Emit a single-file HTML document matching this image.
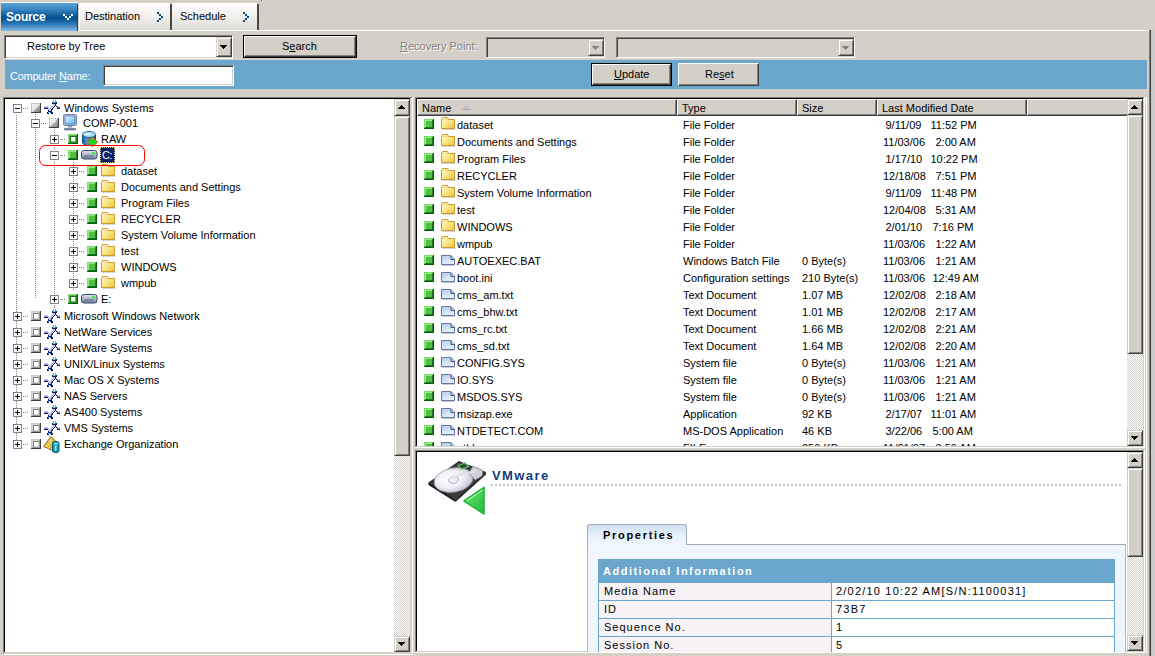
<!DOCTYPE html>
<html><head><meta charset="utf-8"><style>
*{margin:0;padding:0;box-sizing:border-box}
html,body{width:1155px;height:656px;overflow:hidden;background:#d4d0c8;font-family:"Liberation Sans",sans-serif;font-size:11px;color:#000}
body{position:relative}
.a{position:absolute}
.t{position:absolute;white-space:pre;line-height:13px}
svg{position:absolute;overflow:visible}
</style></head><body>
<div class="a" style="left:1px;top:3px;width:76px;height:28px;background:linear-gradient(#5aa3da 0%,#3f8ac4 20%,#0d5a9a 46%,#04508f 54%,#3884bf 80%,#8dbde0 100%)"></div>
<div class="a" style="left:77px;top:4px;width:1px;height:27px;background:#404040"></div>
<div class="a" style="left:1px;top:2px;width:76px;height:1px;background:#fff"></div>
<div class="t" style="left:6px;top:11px;color:#fff;font-weight:bold;font-size:12px;letter-spacing:-0.2px">Source</div>
<svg style="left:63px;top:14px" width="10" height="6"><path d="M0 0h2v2h-2zM2 2h2v2h-2zM4 4h2v2h-2zM6 2h2v2h-2zM8 0h2v2h-2z" fill="#fff"/></svg>
<div class="a" style="left:79px;top:4px;width:91px;height:26px;background:linear-gradient(#fdfdfc,#f0efec 50%,#dddbd6)"></div>
<div class="a" style="left:170px;top:4px;width:2px;height:26px;background:#484848"></div>
<div class="a" style="left:79px;top:4px;width:1px;height:26px;background:#fff"></div>
<div class="a" style="left:172px;top:4px;width:1px;height:26px;background:#fff"></div>
<div class="a" style="left:79px;top:3px;width:91px;height:1px;background:#fff"></div>
<div class="t" style="left:85px;top:10px;">Destination</div>
<div class="a" style="left:172px;top:4px;width:85px;height:26px;background:linear-gradient(#fdfdfc,#f0efec 50%,#dddbd6)"></div>
<div class="a" style="left:257px;top:4px;width:2px;height:26px;background:#484848"></div>
<div class="a" style="left:261px;top:0px;width:1px;height:1px;background:#404040"></div>
<div class="a" style="left:262px;top:0px;width:1px;height:1px;background:#fff"></div>
<div class="a" style="left:172px;top:3px;width:85px;height:1px;background:#fff"></div>
<div class="t" style="left:180px;top:10px;">Schedule</div>
<svg style="left:157px;top:12px" width="7" height="10"><path d="M0 0h2v2h-2zM2 2h2v2h-2zM4 4h2v2h-2zM2 6h2v2h-2zM0 8h2v2h-2z" fill="#0b4a7c"/></svg>
<svg style="left:243px;top:12px" width="7" height="10"><path d="M0 0h2v2h-2zM2 2h2v2h-2zM4 4h2v2h-2zM2 6h2v2h-2zM0 8h2v2h-2z" fill="#0b4a7c"/></svg>
<div class="a" style="left:78px;top:30px;width:1072px;height:1px;background:#fff"></div>
<div class="a" style="left:1149px;top:30px;width:1px;height:626px;background:#808080"></div>
<div class="a" style="left:1150px;top:30px;width:1px;height:626px;background:#404040"></div>
<div class="a" style="left:1151px;top:31px;width:4px;height:625px;background:#cacaca"></div>
<div class="a" style="left:4px;top:35px;width:229px;height:24px;background:#fff;border:1px solid;border-color:#808080 #fff #fff #808080;box-shadow:inset 1px 1px 0 #404040,inset -1px -1px 0 #d4d0c8"></div>
<div class="t" style="left:27px;top:40px;">Restore by Tree</div>
<div class="a" style="left:216px;top:37px;width:16px;height:20px;background:#d4d0c8;border:1px solid;border-color:#d4d0c8 #404040 #404040 #d4d0c8;box-shadow:inset 1px 1px 0 #fff,inset -1px -1px 0 #808080"></div>
<svg style="left:220px;top:45px" width="7" height="4"><path d="M0 0h7v1h-1v1h-1v1h-1v1h-1v-1h-1v-1h-1v-1h-1z" fill="#000"/></svg>
<div class="a" style="left:243px;top:35px;width:114px;height:23px;background:#000"></div>
<div class="a" style="left:244px;top:36px;width:112px;height:21px;background:#d4d0c8;border:1px solid;border-color:#fff #404040 #404040 #fff;box-shadow:inset -1px -1px 0 #808080"></div>
<div class="t" style="left:282px;top:40px;">S<u>e</u>arch</div>
<div class="t" style="left:400px;top:40px;color:#808080;text-shadow:1px 1px 0 #fff"><u>R</u>ecovery Point:</div>
<div class="a" style="left:486px;top:37px;width:119px;height:21px;background:#d4d0c8;border:1px solid;border-color:#808080 #fff #fff #808080;box-shadow:inset 1px 1px 0 #404040,inset -1px -1px 0 #d4d0c8"></div>
<div class="a" style="left:588px;top:39px;width:16px;height:17px;background:#d4d0c8;border:1px solid;border-color:#d4d0c8 #404040 #404040 #d4d0c8;box-shadow:inset 1px 1px 0 #fff,inset -1px -1px 0 #808080"></div>
<svg style="left:592px;top:46px" width="7" height="4"><path d="M0 0h7v1h-1v1h-1v1h-1v1h-1v-1h-1v-1h-1v-1h-1z" fill="#808080"/></svg>
<div class="a" style="left:616px;top:37px;width:239px;height:21px;background:#d4d0c8;border:1px solid;border-color:#808080 #fff #fff #808080;box-shadow:inset 1px 1px 0 #404040,inset -1px -1px 0 #d4d0c8"></div>
<div class="a" style="left:838px;top:39px;width:16px;height:17px;background:#d4d0c8;border:1px solid;border-color:#d4d0c8 #404040 #404040 #d4d0c8;box-shadow:inset 1px 1px 0 #fff,inset -1px -1px 0 #808080"></div>
<svg style="left:842px;top:46px" width="7" height="4"><path d="M0 0h7v1h-1v1h-1v1h-1v1h-1v-1h-1v-1h-1v-1h-1z" fill="#808080"/></svg>
<div class="a" style="left:5px;top:60px;width:1142px;height:29px;background:#6ba6cd"></div>
<div class="t" style="left:10px;top:70px;color:#fff;letter-spacing:-0.25px">Computer <u>N</u>ame:</div>
<div class="a" style="left:103px;top:65px;width:131px;height:21px;background:#fff;border:1px solid;border-color:#808080 #fff #fff #808080;box-shadow:inset 1px 1px 0 #404040,inset -1px -1px 0 #d4d0c8"></div>
<div class="a" style="left:591px;top:63px;width:81px;height:23px;background:#000"></div>
<div class="a" style="left:592px;top:64px;width:79px;height:21px;background:#d4d0c8;border:1px solid;border-color:#fff #404040 #404040 #fff;box-shadow:inset -1px -1px 0 #808080"></div>
<div class="t" style="left:614px;top:68px;"><u>U</u>pdate</div>
<div class="a" style="left:678px;top:63px;width:81px;height:23px;background:#d4d0c8;border:1px solid;border-color:#fff #404040 #404040 #fff;box-shadow:inset -1px -1px 0 #808080"></div>
<div class="t" style="left:705px;top:68px;">Re<u>s</u>et</div>
<div class="a" style="left:3px;top:97px;width:410px;height:558px;background:#d4d0c8"></div>
<div class="a" style="left:3px;top:97px;width:409px;height:1px;background:#808080"></div>
<div class="a" style="left:3px;top:97px;width:1px;height:557px;background:#808080"></div>
<div class="a" style="left:4px;top:98px;width:406px;height:1px;background:#000"></div>
<div class="a" style="left:4px;top:98px;width:1px;height:554px;background:#000"></div>
<div class="a" style="left:412px;top:97px;width:1px;height:558px;background:#fff"></div>
<div class="a" style="left:3px;top:654px;width:410px;height:1px;background:#fff"></div>
<div class="a" style="left:5px;top:99px;width:405px;height:553px;background:#fff"></div>
<svg style="left:394px;top:116px" width="16" height="520"><defs><pattern id="ck1" width="2" height="2" patternUnits="userSpaceOnUse"><rect width="2" height="2" fill="#fff"/><rect width="1" height="1" fill="#d4d0c8"/><rect x="1" y="1" width="1" height="1" fill="#d4d0c8"/></pattern></defs><rect width="16" height="520" fill="url(#ck1)"/></svg>
<div class="a" style="left:394px;top:99px;width:16px;height:17px;background:#d4d0c8;border:1px solid;border-color:#d4d0c8 #404040 #404040 #d4d0c8;box-shadow:inset 1px 1px 0 #fff,inset -1px -1px 0 #808080"></div>
<svg style="left:398px;top:105px" width="7" height="4"><path d="M3 0h1v1h1v1h1v1h1v1h-7v-1h1v-1h1v-1h1z" fill="#000"/></svg>
<div class="a" style="left:394px;top:116px;width:16px;height:340px;background:#d4d0c8;border:1px solid;border-color:#d4d0c8 #404040 #404040 #d4d0c8;box-shadow:inset 1px 1px 0 #fff,inset -1px -1px 0 #808080"></div>
<div class="a" style="left:394px;top:636px;width:16px;height:16px;background:#d4d0c8;border:1px solid;border-color:#d4d0c8 #404040 #404040 #d4d0c8;box-shadow:inset 1px 1px 0 #fff,inset -1px -1px 0 #808080"></div>
<svg style="left:398px;top:642px" width="7" height="4"><path d="M0 0h7v1h-1v1h-1v1h-1v1h-1v-1h-1v-1h-1v-1h-1z" fill="#000"/></svg>
<div class="a" style="left:415px;top:97px;width:730px;height:351px;background:#d4d0c8"></div>
<div class="a" style="left:415px;top:97px;width:729px;height:1px;background:#808080"></div>
<div class="a" style="left:415px;top:97px;width:1px;height:350px;background:#808080"></div>
<div class="a" style="left:416px;top:98px;width:727px;height:1px;background:#000"></div>
<div class="a" style="left:416px;top:98px;width:1px;height:348px;background:#000"></div>
<div class="a" style="left:1144px;top:97px;width:1px;height:351px;background:#fff"></div>
<div class="a" style="left:415px;top:447px;width:730px;height:1px;background:#fff"></div>
<div class="a" style="left:417px;top:99px;width:726px;height:347px;background:#fff"></div>
<div class="a" style="left:1146px;top:97px;width:1px;height:556px;background:#fff"></div>
<div class="a" style="left:417px;top:99px;width:260px;height:17px;background:#d4d0c8;border-style:solid;border-width:1px;border-color:#fff #404040 #404040 #fff;box-shadow:inset -1px -1px 0 #808080"></div>
<div class="t" style="left:422px;top:102px;">Name</div>
<div class="a" style="left:677px;top:99px;width:120px;height:17px;background:#d4d0c8;border-style:solid;border-width:1px;border-color:#fff #404040 #404040 #fff;box-shadow:inset -1px -1px 0 #808080"></div>
<div class="t" style="left:682px;top:102px;">Type</div>
<div class="a" style="left:797px;top:99px;width:80px;height:17px;background:#d4d0c8;border-style:solid;border-width:1px;border-color:#fff #404040 #404040 #fff;box-shadow:inset -1px -1px 0 #808080"></div>
<div class="t" style="left:802px;top:102px;">Size</div>
<div class="a" style="left:877px;top:99px;width:150px;height:17px;background:#d4d0c8;border-style:solid;border-width:1px;border-color:#fff #404040 #404040 #fff;box-shadow:inset -1px -1px 0 #808080"></div>
<div class="t" style="left:882px;top:102px;">Last Modified Date</div>
<div class="a" style="left:1027px;top:99px;width:116px;height:17px;background:#d4d0c8;border-style:solid;border-width:1px;border-color:#fff #404040 #404040 #fff;box-shadow:inset -1px -1px 0 #808080"></div>
<svg style="left:462px;top:104px" width="9" height="6"><path d="M0 5.5L4.5 0L9 5.5Z" fill="#c4c4cc"/><path d="M0.5 5.5H8.5" stroke="#a8a8b0"/></svg>
<svg style="left:1127px;top:115px" width="16" height="315"><defs><pattern id="ck2" width="2" height="2" patternUnits="userSpaceOnUse"><rect width="2" height="2" fill="#fff"/><rect width="1" height="1" fill="#d4d0c8"/><rect x="1" y="1" width="1" height="1" fill="#d4d0c8"/></pattern></defs><rect width="16" height="315" fill="url(#ck2)"/></svg>
<div class="a" style="left:1127px;top:99px;width:16px;height:16px;background:#d4d0c8;border:1px solid;border-color:#d4d0c8 #404040 #404040 #d4d0c8;box-shadow:inset 1px 1px 0 #fff,inset -1px -1px 0 #808080"></div>
<svg style="left:1131px;top:105px" width="7" height="4"><path d="M3 0h1v1h1v1h1v1h1v1h-7v-1h1v-1h1v-1h1z" fill="#000"/></svg>
<div class="a" style="left:1127px;top:115px;width:16px;height:239px;background:#d4d0c8;border:1px solid;border-color:#d4d0c8 #404040 #404040 #d4d0c8;box-shadow:inset 1px 1px 0 #fff,inset -1px -1px 0 #808080"></div>
<div class="a" style="left:1127px;top:430px;width:16px;height:16px;background:#d4d0c8;border:1px solid;border-color:#d4d0c8 #404040 #404040 #d4d0c8;box-shadow:inset 1px 1px 0 #fff,inset -1px -1px 0 #808080"></div>
<svg style="left:1131px;top:436px" width="7" height="4"><path d="M0 0h7v1h-1v1h-1v1h-1v1h-1v-1h-1v-1h-1v-1h-1z" fill="#000"/></svg>
<div class="a" style="left:415px;top:450px;width:730px;height:203px;background:#d4d0c8"></div>
<div class="a" style="left:415px;top:450px;width:729px;height:1px;background:#808080"></div>
<div class="a" style="left:415px;top:450px;width:1px;height:202px;background:#808080"></div>
<div class="a" style="left:416px;top:451px;width:727px;height:1px;background:#000"></div>
<div class="a" style="left:416px;top:451px;width:1px;height:200px;background:#000"></div>
<div class="a" style="left:1144px;top:450px;width:1px;height:203px;background:#fff"></div>
<div class="a" style="left:415px;top:652px;width:730px;height:1px;background:#fff"></div>
<div class="a" style="left:417px;top:452px;width:726px;height:199px;background:#fff"></div>
<svg style="left:1127px;top:468px" width="16" height="167"><defs><pattern id="ck3" width="2" height="2" patternUnits="userSpaceOnUse"><rect width="2" height="2" fill="#fff"/><rect width="1" height="1" fill="#d4d0c8"/><rect x="1" y="1" width="1" height="1" fill="#d4d0c8"/></pattern></defs><rect width="16" height="167" fill="url(#ck3)"/></svg>
<div class="a" style="left:1127px;top:452px;width:16px;height:16px;background:#d4d0c8;border:1px solid;border-color:#d4d0c8 #404040 #404040 #d4d0c8;box-shadow:inset 1px 1px 0 #fff,inset -1px -1px 0 #808080"></div>
<svg style="left:1131px;top:458px" width="7" height="4"><path d="M3 0h1v1h1v1h1v1h1v1h-7v-1h1v-1h1v-1h1z" fill="#000"/></svg>
<div class="a" style="left:1127px;top:468px;width:16px;height:89px;background:#d4d0c8;border:1px solid;border-color:#d4d0c8 #404040 #404040 #d4d0c8;box-shadow:inset 1px 1px 0 #fff,inset -1px -1px 0 #808080"></div>
<div class="a" style="left:1127px;top:635px;width:16px;height:16px;background:#d4d0c8;border:1px solid;border-color:#d4d0c8 #404040 #404040 #d4d0c8;box-shadow:inset 1px 1px 0 #fff,inset -1px -1px 0 #808080"></div>
<svg style="left:1131px;top:641px" width="7" height="4"><path d="M0 0h7v1h-1v1h-1v1h-1v1h-1v-1h-1v-1h-1v-1h-1z" fill="#000"/></svg>
<div class="a" style="left:16px;top:115px;width:1px;height:325px;background:repeating-linear-gradient(#848284 0 1px,transparent 1px 2px)"></div>
<div class="a" style="left:35px;top:114px;width:1px;height:5px;background:repeating-linear-gradient(#848284 0 1px,transparent 1px 2px)"></div>
<div class="a" style="left:35px;top:129px;width:1px;height:170px;background:repeating-linear-gradient(#848284 0 1px,transparent 1px 2px)"></div>
<div class="a" style="left:54px;top:130px;width:1px;height:5px;background:repeating-linear-gradient(#848284 0 1px,transparent 1px 2px)"></div>
<div class="a" style="left:54px;top:145px;width:1px;height:150px;background:repeating-linear-gradient(#848284 0 1px,transparent 1px 2px)"></div>
<div class="a" style="left:54px;top:305px;width:1px;height:3px;background:repeating-linear-gradient(#848284 0 1px,transparent 1px 2px)"></div>
<div class="a" style="left:73px;top:162px;width:1px;height:5px;background:repeating-linear-gradient(#848284 0 1px,transparent 1px 2px)"></div>
<div class="a" style="left:73px;top:177px;width:1px;height:6px;background:repeating-linear-gradient(#848284 0 1px,transparent 1px 2px)"></div>
<div class="a" style="left:73px;top:193px;width:1px;height:6px;background:repeating-linear-gradient(#848284 0 1px,transparent 1px 2px)"></div>
<div class="a" style="left:73px;top:209px;width:1px;height:6px;background:repeating-linear-gradient(#848284 0 1px,transparent 1px 2px)"></div>
<div class="a" style="left:73px;top:225px;width:1px;height:6px;background:repeating-linear-gradient(#848284 0 1px,transparent 1px 2px)"></div>
<div class="a" style="left:73px;top:241px;width:1px;height:6px;background:repeating-linear-gradient(#848284 0 1px,transparent 1px 2px)"></div>
<div class="a" style="left:73px;top:257px;width:1px;height:6px;background:repeating-linear-gradient(#848284 0 1px,transparent 1px 2px)"></div>
<div class="a" style="left:73px;top:273px;width:1px;height:6px;background:repeating-linear-gradient(#848284 0 1px,transparent 1px 2px)"></div>
<div class="a" style="left:73px;top:289px;width:1px;height:2px;background:repeating-linear-gradient(#848284 0 1px,transparent 1px 2px)"></div>
<div class="a" style="left:23px;top:108px;width:6px;height:1px;background:repeating-linear-gradient(90deg,#848284 0 1px,transparent 1px 2px)"></div>
<div class="a" style="left:13px;top:104px;width:9px;height:9px;border:1px solid #848284;background:#fff"></div>
<div class="a" style="left:15px;top:108px;width:5px;height:1px;background:#000"></div>
<svg style="left:31px;top:103px" width="10" height="10"><defs><linearGradient id="gf" x1="0" y1="0" x2="1" y2="1"><stop offset="0" stop-color="#fafafa"/><stop offset="0.5" stop-color="#e4e4e4"/><stop offset="0.5" stop-color="#b4b4b4"/><stop offset="1" stop-color="#707070"/></linearGradient></defs><rect width="10" height="10" fill="url(#gf)"/><path d="M0 0h10v1h-10z" fill="#c8c8c8"/><path d="M0 0h1v10h-1z" fill="#c0c0c0"/><path d="M9 0h1v10h-1zM0 9h10v1h-10z" fill="#3c3c3c"/></svg>
<svg style="left:44px;top:100px" width="16" height="14"><rect x="9" y="0" width="1" height="1" fill="#8e98c8"/><rect x="11" y="0" width="1" height="1" fill="#8e98c8"/><rect x="9" y="1" width="1" height="1" fill="#8e98c8"/><rect x="11" y="1" width="1" height="1" fill="#8e98c8"/><rect x="8" y="2" width="1" height="1" fill="#0e1a5c"/><rect x="9" y="2" width="2" height="1" fill="#48dcff"/><rect x="11" y="2" width="1" height="1" fill="#2a6ae6"/><rect x="12" y="2" width="1" height="1" fill="#0e1a5c"/><rect x="8" y="3" width="5" height="1" fill="#0e1a5c"/><rect x="9" y="4" width="2" height="1" fill="#c2c8e8"/><rect x="11" y="4" width="1" height="1" fill="#0e1a5c"/><rect x="8" y="5" width="3" height="1" fill="#c2c8e8"/><rect x="11" y="5" width="1" height="1" fill="#0e1a5c"/><rect x="12" y="5" width="1" height="1" fill="#c2c8e8"/><rect x="0" y="6" width="4" height="1" fill="#c2c8e8"/><rect x="7" y="6" width="3" height="1" fill="#c2c8e8"/><rect x="10" y="6" width="1" height="1" fill="#0e1a5c"/><rect x="12" y="6" width="1" height="1" fill="#0e1a5c"/><rect x="13" y="6" width="3" height="1" fill="#c2c8e8"/><rect x="0" y="7" width="4" height="1" fill="#8e98c8"/><rect x="4" y="7" width="1" height="1" fill="#c2c8e8"/><rect x="6" y="7" width="3" height="1" fill="#c2c8e8"/><rect x="9" y="7" width="1" height="1" fill="#0e1a5c"/><rect x="13" y="7" width="1" height="1" fill="#0e1a5c"/><rect x="14" y="7" width="2" height="1" fill="#8e98c8"/><rect x="0" y="8" width="4" height="1" fill="#0e1a5c"/><rect x="4" y="8" width="4" height="1" fill="#c2c8e8"/><rect x="8" y="8" width="1" height="1" fill="#0e1a5c"/><rect x="13" y="8" width="3" height="1" fill="#0e1a5c"/><rect x="4" y="9" width="3" height="1" fill="#c2c8e8"/><rect x="7" y="9" width="2" height="1" fill="#0e1a5c"/><rect x="4" y="10" width="1" height="1" fill="#0e1a5c"/><rect x="5" y="10" width="2" height="1" fill="#c2c8e8"/><rect x="7" y="10" width="1" height="1" fill="#0e1a5c"/><rect x="4" y="11" width="4" height="1" fill="#0e1a5c"/><rect x="3" y="12" width="1" height="1" fill="#0e1a5c"/><rect x="4" y="12" width="2" height="1" fill="#48dcff"/><rect x="6" y="12" width="1" height="1" fill="#2a6ae6"/><rect x="7" y="12" width="2" height="1" fill="#0e1a5c"/><rect x="3" y="13" width="2" height="1" fill="#0e1a5c"/><rect x="7" y="13" width="2" height="1" fill="#0e1a5c"/></svg>
<div class="t" style="left:64px;top:102px;">Windows Systems</div>
<div class="a" style="left:41px;top:123px;width:6px;height:1px;background:repeating-linear-gradient(90deg,#848284 0 1px,transparent 1px 2px)"></div>
<div class="a" style="left:31px;top:119px;width:9px;height:9px;border:1px solid #848284;background:#fff"></div>
<div class="a" style="left:33px;top:123px;width:5px;height:1px;background:#000"></div>
<svg style="left:49px;top:118px" width="10" height="10"><defs><linearGradient id="gf" x1="0" y1="0" x2="1" y2="1"><stop offset="0" stop-color="#fafafa"/><stop offset="0.5" stop-color="#e4e4e4"/><stop offset="0.5" stop-color="#b4b4b4"/><stop offset="1" stop-color="#707070"/></linearGradient></defs><rect width="10" height="10" fill="url(#gf)"/><path d="M0 0h10v1h-10z" fill="#c8c8c8"/><path d="M0 0h1v10h-1z" fill="#c0c0c0"/><path d="M9 0h1v10h-1zM0 9h10v1h-10z" fill="#3c3c3c"/></svg>
<svg style="left:63px;top:114px" width="15" height="17"><defs><linearGradient id="cs" x1="0" y1="0" x2="1" y2="1"><stop offset="0" stop-color="#e8f6ff"/><stop offset="0.5" stop-color="#9fd6f6"/><stop offset="1" stop-color="#5fb8ea"/></linearGradient></defs><rect x="0.5" y="0.5" width="13" height="11" rx="1" fill="#c4cce0" stroke="#7a86a8"/><rect x="2" y="2" width="10" height="8" fill="url(#cs)" stroke="#4a78b8" stroke-width="0.8"/><path d="M5 12H9L9.5 13.5H4.5Z" fill="#8a96b4"/><path d="M1.5 14.5H12.5V16H1.5Z" fill="#7680a0" stroke="#5a6488" stroke-width="0.6"/></svg>
<div class="t" style="left:83px;top:117px;">COMP-001</div>
<div class="a" style="left:60px;top:139px;width:6px;height:1px;background:repeating-linear-gradient(90deg,#848284 0 1px,transparent 1px 2px)"></div>
<div class="a" style="left:50px;top:135px;width:9px;height:9px;border:1px solid #848284;background:#fff"></div>
<div class="a" style="left:52px;top:139px;width:5px;height:1px;background:#000"></div>
<div class="a" style="left:54px;top:137px;width:1px;height:5px;background:#000"></div>
<svg style="left:68px;top:134px" width="10" height="10"><rect width="10" height="10" fill="#58c448"/><path d="M0 0h10v1h-10zM0 0h1v10h-1z" fill="#8ae078"/><path d="M2 2h6v1h-6zM2 2h1v6h-1z" fill="#1c6e1c"/><rect x="3" y="3" width="4" height="4" fill="#fff"/><path d="M9 0h1v10h-1zM0 9h10v1h-10z" fill="#0a5a10"/><path d="M8 1h1v8h-1zM1 8h8v1h-8z" fill="#2a8a28"/></svg>
<svg style="left:82px;top:131px" width="17" height="17"><defs><linearGradient id="db" x1="0" y1="0" x2="1" y2="0"><stop offset="0" stop-color="#1a5f94"/><stop offset="0.35" stop-color="#4b98cc"/><stop offset="1" stop-color="#164f80"/></linearGradient></defs><path d="M0.5 3.5V11.5C0.5 13.2 3.5 14.5 7 14.5C10.5 14.5 13.5 13.2 13.5 11.5V3.5Z" fill="url(#db)" stroke="#124a78"/><ellipse cx="7" cy="3.5" rx="6.5" ry="3" fill="#a8d6ee" stroke="#1f6a9c"/><ellipse cx="6" cy="3.2" rx="3.5" ry="1.3" fill="#d8f0fc"/><path d="M10.5 6.5L15.5 11L10.5 15.5L5.5 11Z" fill="#10e020" stroke="#c07020" stroke-width="1.2"/></svg>
<div class="t" style="left:101px;top:133px;">RAW</div>
<div class="a" style="left:60px;top:155px;width:6px;height:1px;background:repeating-linear-gradient(90deg,#848284 0 1px,transparent 1px 2px)"></div>
<div class="a" style="left:50px;top:151px;width:9px;height:9px;border:1px solid #848284;background:#fff"></div>
<div class="a" style="left:52px;top:155px;width:5px;height:1px;background:#000"></div>
<svg style="left:68px;top:150px" width="10" height="10"><rect width="10" height="10" fill="#48b53a"/><path d="M0 0h10v1h-10zM0 0h1v10h-1z" fill="#7edc6c"/><path d="M1 1h8v1h-8zM1 1h1v8h-1z" fill="#9be88a"/><path d="M2 2h6v6h-6z" fill="#52bf42"/><path d="M9 0h1v10h-1zM0 9h10v1h-10z" fill="#0a5a10"/><path d="M8 1h1v8h-1zM1 8h8v1h-8z" fill="#1d7a1e"/></svg>
<svg style="left:81px;top:150px" width="17" height="10"><defs><linearGradient id="dr" x1="0" y1="0" x2="0" y2="1"><stop offset="0" stop-color="#dfe4ee"/><stop offset="0.55" stop-color="#aab4c8"/><stop offset="1" stop-color="#6a7898"/></linearGradient></defs><rect x="0.5" y="0.5" width="15.5" height="8.5" rx="2.5" fill="url(#dr)" stroke="#3a4870"/><path d="M2.5 6H13" stroke="#5a6888" stroke-width="1"/><rect x="11" y="2.5" width="3" height="1.5" fill="#22e030"/></svg>
<div class="a" style="left:100px;top:147px;width:15px;height:16px;background:#0a246a;outline:1px dotted #f0d070;outline-offset:-1px"></div>
<div class="t" style="left:102px;top:149px;color:#fff;letter-spacing:-0.6px">C:</div>
<div class="a" style="left:79px;top:171px;width:6px;height:1px;background:repeating-linear-gradient(90deg,#848284 0 1px,transparent 1px 2px)"></div>
<div class="a" style="left:69px;top:167px;width:9px;height:9px;border:1px solid #848284;background:#fff"></div>
<div class="a" style="left:71px;top:171px;width:5px;height:1px;background:#000"></div>
<div class="a" style="left:73px;top:169px;width:1px;height:5px;background:#000"></div>
<svg style="left:87px;top:166px" width="10" height="10"><rect width="10" height="10" fill="#48b53a"/><path d="M0 0h10v1h-10zM0 0h1v10h-1z" fill="#7edc6c"/><path d="M1 1h8v1h-8zM1 1h1v8h-1z" fill="#9be88a"/><path d="M2 2h6v6h-6z" fill="#52bf42"/><path d="M9 0h1v10h-1zM0 9h10v1h-10z" fill="#0a5a10"/><path d="M8 1h1v8h-1zM1 8h8v1h-8z" fill="#1d7a1e"/></svg>
<svg style="left:101px;top:164px" width="15" height="13"><defs><linearGradient id="fg" x1="0" y1="0" x2="1" y2="1"><stop offset="0" stop-color="#fffbe0"/><stop offset="0.45" stop-color="#fbe88c"/><stop offset="1" stop-color="#eec23c"/></linearGradient></defs><path d="M1 12.5L14.5 12.5L14.5 13" stroke="#d8d8d8" fill="none"/><path d="M0.5 2.5L1.5 0.5H6.5L7.5 2.5H13.5V11.5H0.5Z" fill="url(#fg)" stroke="#c99a2e"/><path d="M1 2.5H7" stroke="#f6dc80"/></svg>
<div class="t" style="left:121px;top:165px;">dataset</div>
<div class="a" style="left:79px;top:187px;width:6px;height:1px;background:repeating-linear-gradient(90deg,#848284 0 1px,transparent 1px 2px)"></div>
<div class="a" style="left:69px;top:183px;width:9px;height:9px;border:1px solid #848284;background:#fff"></div>
<div class="a" style="left:71px;top:187px;width:5px;height:1px;background:#000"></div>
<div class="a" style="left:73px;top:185px;width:1px;height:5px;background:#000"></div>
<svg style="left:87px;top:182px" width="10" height="10"><rect width="10" height="10" fill="#48b53a"/><path d="M0 0h10v1h-10zM0 0h1v10h-1z" fill="#7edc6c"/><path d="M1 1h8v1h-8zM1 1h1v8h-1z" fill="#9be88a"/><path d="M2 2h6v6h-6z" fill="#52bf42"/><path d="M9 0h1v10h-1zM0 9h10v1h-10z" fill="#0a5a10"/><path d="M8 1h1v8h-1zM1 8h8v1h-8z" fill="#1d7a1e"/></svg>
<svg style="left:101px;top:180px" width="15" height="13"><defs><linearGradient id="fg" x1="0" y1="0" x2="1" y2="1"><stop offset="0" stop-color="#fffbe0"/><stop offset="0.45" stop-color="#fbe88c"/><stop offset="1" stop-color="#eec23c"/></linearGradient></defs><path d="M1 12.5L14.5 12.5L14.5 13" stroke="#d8d8d8" fill="none"/><path d="M0.5 2.5L1.5 0.5H6.5L7.5 2.5H13.5V11.5H0.5Z" fill="url(#fg)" stroke="#c99a2e"/><path d="M1 2.5H7" stroke="#f6dc80"/></svg>
<div class="t" style="left:121px;top:181px;">Documents and Settings</div>
<div class="a" style="left:79px;top:203px;width:6px;height:1px;background:repeating-linear-gradient(90deg,#848284 0 1px,transparent 1px 2px)"></div>
<div class="a" style="left:69px;top:199px;width:9px;height:9px;border:1px solid #848284;background:#fff"></div>
<div class="a" style="left:71px;top:203px;width:5px;height:1px;background:#000"></div>
<div class="a" style="left:73px;top:201px;width:1px;height:5px;background:#000"></div>
<svg style="left:87px;top:198px" width="10" height="10"><rect width="10" height="10" fill="#48b53a"/><path d="M0 0h10v1h-10zM0 0h1v10h-1z" fill="#7edc6c"/><path d="M1 1h8v1h-8zM1 1h1v8h-1z" fill="#9be88a"/><path d="M2 2h6v6h-6z" fill="#52bf42"/><path d="M9 0h1v10h-1zM0 9h10v1h-10z" fill="#0a5a10"/><path d="M8 1h1v8h-1zM1 8h8v1h-8z" fill="#1d7a1e"/></svg>
<svg style="left:101px;top:196px" width="15" height="13"><defs><linearGradient id="fg" x1="0" y1="0" x2="1" y2="1"><stop offset="0" stop-color="#fffbe0"/><stop offset="0.45" stop-color="#fbe88c"/><stop offset="1" stop-color="#eec23c"/></linearGradient></defs><path d="M1 12.5L14.5 12.5L14.5 13" stroke="#d8d8d8" fill="none"/><path d="M0.5 2.5L1.5 0.5H6.5L7.5 2.5H13.5V11.5H0.5Z" fill="url(#fg)" stroke="#c99a2e"/><path d="M1 2.5H7" stroke="#f6dc80"/></svg>
<div class="t" style="left:121px;top:197px;">Program Files</div>
<div class="a" style="left:79px;top:219px;width:6px;height:1px;background:repeating-linear-gradient(90deg,#848284 0 1px,transparent 1px 2px)"></div>
<div class="a" style="left:69px;top:215px;width:9px;height:9px;border:1px solid #848284;background:#fff"></div>
<div class="a" style="left:71px;top:219px;width:5px;height:1px;background:#000"></div>
<div class="a" style="left:73px;top:217px;width:1px;height:5px;background:#000"></div>
<svg style="left:87px;top:214px" width="10" height="10"><rect width="10" height="10" fill="#48b53a"/><path d="M0 0h10v1h-10zM0 0h1v10h-1z" fill="#7edc6c"/><path d="M1 1h8v1h-8zM1 1h1v8h-1z" fill="#9be88a"/><path d="M2 2h6v6h-6z" fill="#52bf42"/><path d="M9 0h1v10h-1zM0 9h10v1h-10z" fill="#0a5a10"/><path d="M8 1h1v8h-1zM1 8h8v1h-8z" fill="#1d7a1e"/></svg>
<svg style="left:101px;top:212px" width="15" height="13"><defs><linearGradient id="fg" x1="0" y1="0" x2="1" y2="1"><stop offset="0" stop-color="#fffbe0"/><stop offset="0.45" stop-color="#fbe88c"/><stop offset="1" stop-color="#eec23c"/></linearGradient></defs><path d="M1 12.5L14.5 12.5L14.5 13" stroke="#d8d8d8" fill="none"/><path d="M0.5 2.5L1.5 0.5H6.5L7.5 2.5H13.5V11.5H0.5Z" fill="url(#fg)" stroke="#c99a2e"/><path d="M1 2.5H7" stroke="#f6dc80"/></svg>
<div class="t" style="left:121px;top:213px;">RECYCLER</div>
<div class="a" style="left:79px;top:235px;width:6px;height:1px;background:repeating-linear-gradient(90deg,#848284 0 1px,transparent 1px 2px)"></div>
<div class="a" style="left:69px;top:231px;width:9px;height:9px;border:1px solid #848284;background:#fff"></div>
<div class="a" style="left:71px;top:235px;width:5px;height:1px;background:#000"></div>
<div class="a" style="left:73px;top:233px;width:1px;height:5px;background:#000"></div>
<svg style="left:87px;top:230px" width="10" height="10"><rect width="10" height="10" fill="#48b53a"/><path d="M0 0h10v1h-10zM0 0h1v10h-1z" fill="#7edc6c"/><path d="M1 1h8v1h-8zM1 1h1v8h-1z" fill="#9be88a"/><path d="M2 2h6v6h-6z" fill="#52bf42"/><path d="M9 0h1v10h-1zM0 9h10v1h-10z" fill="#0a5a10"/><path d="M8 1h1v8h-1zM1 8h8v1h-8z" fill="#1d7a1e"/></svg>
<svg style="left:101px;top:228px" width="15" height="13"><defs><linearGradient id="fg" x1="0" y1="0" x2="1" y2="1"><stop offset="0" stop-color="#fffbe0"/><stop offset="0.45" stop-color="#fbe88c"/><stop offset="1" stop-color="#eec23c"/></linearGradient></defs><path d="M1 12.5L14.5 12.5L14.5 13" stroke="#d8d8d8" fill="none"/><path d="M0.5 2.5L1.5 0.5H6.5L7.5 2.5H13.5V11.5H0.5Z" fill="url(#fg)" stroke="#c99a2e"/><path d="M1 2.5H7" stroke="#f6dc80"/></svg>
<div class="t" style="left:121px;top:229px;">System Volume Information</div>
<div class="a" style="left:79px;top:251px;width:6px;height:1px;background:repeating-linear-gradient(90deg,#848284 0 1px,transparent 1px 2px)"></div>
<div class="a" style="left:69px;top:247px;width:9px;height:9px;border:1px solid #848284;background:#fff"></div>
<div class="a" style="left:71px;top:251px;width:5px;height:1px;background:#000"></div>
<div class="a" style="left:73px;top:249px;width:1px;height:5px;background:#000"></div>
<svg style="left:87px;top:246px" width="10" height="10"><rect width="10" height="10" fill="#48b53a"/><path d="M0 0h10v1h-10zM0 0h1v10h-1z" fill="#7edc6c"/><path d="M1 1h8v1h-8zM1 1h1v8h-1z" fill="#9be88a"/><path d="M2 2h6v6h-6z" fill="#52bf42"/><path d="M9 0h1v10h-1zM0 9h10v1h-10z" fill="#0a5a10"/><path d="M8 1h1v8h-1zM1 8h8v1h-8z" fill="#1d7a1e"/></svg>
<svg style="left:101px;top:244px" width="15" height="13"><defs><linearGradient id="fg" x1="0" y1="0" x2="1" y2="1"><stop offset="0" stop-color="#fffbe0"/><stop offset="0.45" stop-color="#fbe88c"/><stop offset="1" stop-color="#eec23c"/></linearGradient></defs><path d="M1 12.5L14.5 12.5L14.5 13" stroke="#d8d8d8" fill="none"/><path d="M0.5 2.5L1.5 0.5H6.5L7.5 2.5H13.5V11.5H0.5Z" fill="url(#fg)" stroke="#c99a2e"/><path d="M1 2.5H7" stroke="#f6dc80"/></svg>
<div class="t" style="left:121px;top:245px;">test</div>
<div class="a" style="left:79px;top:267px;width:6px;height:1px;background:repeating-linear-gradient(90deg,#848284 0 1px,transparent 1px 2px)"></div>
<div class="a" style="left:69px;top:263px;width:9px;height:9px;border:1px solid #848284;background:#fff"></div>
<div class="a" style="left:71px;top:267px;width:5px;height:1px;background:#000"></div>
<div class="a" style="left:73px;top:265px;width:1px;height:5px;background:#000"></div>
<svg style="left:87px;top:262px" width="10" height="10"><rect width="10" height="10" fill="#48b53a"/><path d="M0 0h10v1h-10zM0 0h1v10h-1z" fill="#7edc6c"/><path d="M1 1h8v1h-8zM1 1h1v8h-1z" fill="#9be88a"/><path d="M2 2h6v6h-6z" fill="#52bf42"/><path d="M9 0h1v10h-1zM0 9h10v1h-10z" fill="#0a5a10"/><path d="M8 1h1v8h-1zM1 8h8v1h-8z" fill="#1d7a1e"/></svg>
<svg style="left:101px;top:260px" width="15" height="13"><defs><linearGradient id="fg" x1="0" y1="0" x2="1" y2="1"><stop offset="0" stop-color="#fffbe0"/><stop offset="0.45" stop-color="#fbe88c"/><stop offset="1" stop-color="#eec23c"/></linearGradient></defs><path d="M1 12.5L14.5 12.5L14.5 13" stroke="#d8d8d8" fill="none"/><path d="M0.5 2.5L1.5 0.5H6.5L7.5 2.5H13.5V11.5H0.5Z" fill="url(#fg)" stroke="#c99a2e"/><path d="M1 2.5H7" stroke="#f6dc80"/></svg>
<div class="t" style="left:121px;top:261px;">WINDOWS</div>
<div class="a" style="left:79px;top:283px;width:6px;height:1px;background:repeating-linear-gradient(90deg,#848284 0 1px,transparent 1px 2px)"></div>
<div class="a" style="left:69px;top:279px;width:9px;height:9px;border:1px solid #848284;background:#fff"></div>
<div class="a" style="left:71px;top:283px;width:5px;height:1px;background:#000"></div>
<div class="a" style="left:73px;top:281px;width:1px;height:5px;background:#000"></div>
<svg style="left:87px;top:278px" width="10" height="10"><rect width="10" height="10" fill="#48b53a"/><path d="M0 0h10v1h-10zM0 0h1v10h-1z" fill="#7edc6c"/><path d="M1 1h8v1h-8zM1 1h1v8h-1z" fill="#9be88a"/><path d="M2 2h6v6h-6z" fill="#52bf42"/><path d="M9 0h1v10h-1zM0 9h10v1h-10z" fill="#0a5a10"/><path d="M8 1h1v8h-1zM1 8h8v1h-8z" fill="#1d7a1e"/></svg>
<svg style="left:101px;top:276px" width="15" height="13"><defs><linearGradient id="fg" x1="0" y1="0" x2="1" y2="1"><stop offset="0" stop-color="#fffbe0"/><stop offset="0.45" stop-color="#fbe88c"/><stop offset="1" stop-color="#eec23c"/></linearGradient></defs><path d="M1 12.5L14.5 12.5L14.5 13" stroke="#d8d8d8" fill="none"/><path d="M0.5 2.5L1.5 0.5H6.5L7.5 2.5H13.5V11.5H0.5Z" fill="url(#fg)" stroke="#c99a2e"/><path d="M1 2.5H7" stroke="#f6dc80"/></svg>
<div class="t" style="left:121px;top:277px;">wmpub</div>
<div class="a" style="left:60px;top:299px;width:6px;height:1px;background:repeating-linear-gradient(90deg,#848284 0 1px,transparent 1px 2px)"></div>
<div class="a" style="left:50px;top:295px;width:9px;height:9px;border:1px solid #848284;background:#fff"></div>
<div class="a" style="left:52px;top:299px;width:5px;height:1px;background:#000"></div>
<div class="a" style="left:54px;top:297px;width:1px;height:5px;background:#000"></div>
<svg style="left:68px;top:294px" width="10" height="10"><rect width="10" height="10" fill="#58c448"/><path d="M0 0h10v1h-10zM0 0h1v10h-1z" fill="#8ae078"/><path d="M2 2h6v1h-6zM2 2h1v6h-1z" fill="#1c6e1c"/><rect x="3" y="3" width="4" height="4" fill="#fff"/><path d="M9 0h1v10h-1zM0 9h10v1h-10z" fill="#0a5a10"/><path d="M8 1h1v8h-1zM1 8h8v1h-8z" fill="#2a8a28"/></svg>
<svg style="left:81px;top:294px" width="17" height="10"><defs><linearGradient id="dr" x1="0" y1="0" x2="0" y2="1"><stop offset="0" stop-color="#dfe4ee"/><stop offset="0.55" stop-color="#aab4c8"/><stop offset="1" stop-color="#6a7898"/></linearGradient></defs><rect x="0.5" y="0.5" width="15.5" height="8.5" rx="2.5" fill="url(#dr)" stroke="#3a4870"/><path d="M2.5 6H13" stroke="#5a6888" stroke-width="1"/><rect x="11" y="2.5" width="3" height="1.5" fill="#22e030"/></svg>
<div class="t" style="left:101px;top:293px;">E:</div>
<div class="a" style="left:23px;top:316px;width:6px;height:1px;background:repeating-linear-gradient(90deg,#848284 0 1px,transparent 1px 2px)"></div>
<div class="a" style="left:13px;top:312px;width:9px;height:9px;border:1px solid #848284;background:#fff"></div>
<div class="a" style="left:15px;top:316px;width:5px;height:1px;background:#000"></div>
<div class="a" style="left:17px;top:314px;width:1px;height:5px;background:#000"></div>
<svg style="left:31px;top:311px" width="10" height="10"><rect width="10" height="10" fill="#c8c8c8"/><path d="M1 1h8v8h-8z" fill="#d6d6d6"/><path d="M2 2h6v1h-6zM2 2h1v6h-1z" fill="#808080"/><rect x="3" y="3" width="4" height="4" fill="#fff"/><path d="M9 0h1v10h-1zM0 9h10v1h-10z" fill="#404040"/><path d="M8 1h1v8h-1zM1 8h8v1h-8z" fill="#9a9a9a"/></svg>
<svg style="left:44px;top:309px" width="16" height="14"><rect x="9" y="0" width="1" height="1" fill="#8e98c8"/><rect x="11" y="0" width="1" height="1" fill="#8e98c8"/><rect x="9" y="1" width="1" height="1" fill="#8e98c8"/><rect x="11" y="1" width="1" height="1" fill="#8e98c8"/><rect x="8" y="2" width="1" height="1" fill="#0e1a5c"/><rect x="9" y="2" width="2" height="1" fill="#48dcff"/><rect x="11" y="2" width="1" height="1" fill="#2a6ae6"/><rect x="12" y="2" width="1" height="1" fill="#0e1a5c"/><rect x="8" y="3" width="5" height="1" fill="#0e1a5c"/><rect x="9" y="4" width="2" height="1" fill="#c2c8e8"/><rect x="11" y="4" width="1" height="1" fill="#0e1a5c"/><rect x="8" y="5" width="3" height="1" fill="#c2c8e8"/><rect x="11" y="5" width="1" height="1" fill="#0e1a5c"/><rect x="12" y="5" width="1" height="1" fill="#c2c8e8"/><rect x="0" y="6" width="4" height="1" fill="#c2c8e8"/><rect x="7" y="6" width="3" height="1" fill="#c2c8e8"/><rect x="10" y="6" width="1" height="1" fill="#0e1a5c"/><rect x="12" y="6" width="1" height="1" fill="#0e1a5c"/><rect x="13" y="6" width="3" height="1" fill="#c2c8e8"/><rect x="0" y="7" width="4" height="1" fill="#8e98c8"/><rect x="4" y="7" width="1" height="1" fill="#c2c8e8"/><rect x="6" y="7" width="3" height="1" fill="#c2c8e8"/><rect x="9" y="7" width="1" height="1" fill="#0e1a5c"/><rect x="13" y="7" width="1" height="1" fill="#0e1a5c"/><rect x="14" y="7" width="2" height="1" fill="#8e98c8"/><rect x="0" y="8" width="4" height="1" fill="#0e1a5c"/><rect x="4" y="8" width="4" height="1" fill="#c2c8e8"/><rect x="8" y="8" width="1" height="1" fill="#0e1a5c"/><rect x="13" y="8" width="3" height="1" fill="#0e1a5c"/><rect x="4" y="9" width="3" height="1" fill="#c2c8e8"/><rect x="7" y="9" width="2" height="1" fill="#0e1a5c"/><rect x="4" y="10" width="1" height="1" fill="#0e1a5c"/><rect x="5" y="10" width="2" height="1" fill="#c2c8e8"/><rect x="7" y="10" width="1" height="1" fill="#0e1a5c"/><rect x="4" y="11" width="4" height="1" fill="#0e1a5c"/><rect x="3" y="12" width="1" height="1" fill="#0e1a5c"/><rect x="4" y="12" width="2" height="1" fill="#48dcff"/><rect x="6" y="12" width="1" height="1" fill="#2a6ae6"/><rect x="7" y="12" width="2" height="1" fill="#0e1a5c"/><rect x="3" y="13" width="2" height="1" fill="#0e1a5c"/><rect x="7" y="13" width="2" height="1" fill="#0e1a5c"/></svg>
<div class="t" style="left:64px;top:310px;">Microsoft Windows Network</div>
<div class="a" style="left:23px;top:332px;width:6px;height:1px;background:repeating-linear-gradient(90deg,#848284 0 1px,transparent 1px 2px)"></div>
<div class="a" style="left:13px;top:328px;width:9px;height:9px;border:1px solid #848284;background:#fff"></div>
<div class="a" style="left:15px;top:332px;width:5px;height:1px;background:#000"></div>
<div class="a" style="left:17px;top:330px;width:1px;height:5px;background:#000"></div>
<svg style="left:31px;top:327px" width="10" height="10"><rect width="10" height="10" fill="#c8c8c8"/><path d="M1 1h8v8h-8z" fill="#d6d6d6"/><path d="M2 2h6v1h-6zM2 2h1v6h-1z" fill="#808080"/><rect x="3" y="3" width="4" height="4" fill="#fff"/><path d="M9 0h1v10h-1zM0 9h10v1h-10z" fill="#404040"/><path d="M8 1h1v8h-1zM1 8h8v1h-8z" fill="#9a9a9a"/></svg>
<svg style="left:44px;top:325px" width="16" height="14"><rect x="9" y="0" width="1" height="1" fill="#8e98c8"/><rect x="11" y="0" width="1" height="1" fill="#8e98c8"/><rect x="9" y="1" width="1" height="1" fill="#8e98c8"/><rect x="11" y="1" width="1" height="1" fill="#8e98c8"/><rect x="8" y="2" width="1" height="1" fill="#0e1a5c"/><rect x="9" y="2" width="2" height="1" fill="#48dcff"/><rect x="11" y="2" width="1" height="1" fill="#2a6ae6"/><rect x="12" y="2" width="1" height="1" fill="#0e1a5c"/><rect x="8" y="3" width="5" height="1" fill="#0e1a5c"/><rect x="9" y="4" width="2" height="1" fill="#c2c8e8"/><rect x="11" y="4" width="1" height="1" fill="#0e1a5c"/><rect x="8" y="5" width="3" height="1" fill="#c2c8e8"/><rect x="11" y="5" width="1" height="1" fill="#0e1a5c"/><rect x="12" y="5" width="1" height="1" fill="#c2c8e8"/><rect x="0" y="6" width="4" height="1" fill="#c2c8e8"/><rect x="7" y="6" width="3" height="1" fill="#c2c8e8"/><rect x="10" y="6" width="1" height="1" fill="#0e1a5c"/><rect x="12" y="6" width="1" height="1" fill="#0e1a5c"/><rect x="13" y="6" width="3" height="1" fill="#c2c8e8"/><rect x="0" y="7" width="4" height="1" fill="#8e98c8"/><rect x="4" y="7" width="1" height="1" fill="#c2c8e8"/><rect x="6" y="7" width="3" height="1" fill="#c2c8e8"/><rect x="9" y="7" width="1" height="1" fill="#0e1a5c"/><rect x="13" y="7" width="1" height="1" fill="#0e1a5c"/><rect x="14" y="7" width="2" height="1" fill="#8e98c8"/><rect x="0" y="8" width="4" height="1" fill="#0e1a5c"/><rect x="4" y="8" width="4" height="1" fill="#c2c8e8"/><rect x="8" y="8" width="1" height="1" fill="#0e1a5c"/><rect x="13" y="8" width="3" height="1" fill="#0e1a5c"/><rect x="4" y="9" width="3" height="1" fill="#c2c8e8"/><rect x="7" y="9" width="2" height="1" fill="#0e1a5c"/><rect x="4" y="10" width="1" height="1" fill="#0e1a5c"/><rect x="5" y="10" width="2" height="1" fill="#c2c8e8"/><rect x="7" y="10" width="1" height="1" fill="#0e1a5c"/><rect x="4" y="11" width="4" height="1" fill="#0e1a5c"/><rect x="3" y="12" width="1" height="1" fill="#0e1a5c"/><rect x="4" y="12" width="2" height="1" fill="#48dcff"/><rect x="6" y="12" width="1" height="1" fill="#2a6ae6"/><rect x="7" y="12" width="2" height="1" fill="#0e1a5c"/><rect x="3" y="13" width="2" height="1" fill="#0e1a5c"/><rect x="7" y="13" width="2" height="1" fill="#0e1a5c"/></svg>
<div class="t" style="left:64px;top:326px;">NetWare Services</div>
<div class="a" style="left:23px;top:348px;width:6px;height:1px;background:repeating-linear-gradient(90deg,#848284 0 1px,transparent 1px 2px)"></div>
<div class="a" style="left:13px;top:344px;width:9px;height:9px;border:1px solid #848284;background:#fff"></div>
<div class="a" style="left:15px;top:348px;width:5px;height:1px;background:#000"></div>
<div class="a" style="left:17px;top:346px;width:1px;height:5px;background:#000"></div>
<svg style="left:31px;top:343px" width="10" height="10"><rect width="10" height="10" fill="#c8c8c8"/><path d="M1 1h8v8h-8z" fill="#d6d6d6"/><path d="M2 2h6v1h-6zM2 2h1v6h-1z" fill="#808080"/><rect x="3" y="3" width="4" height="4" fill="#fff"/><path d="M9 0h1v10h-1zM0 9h10v1h-10z" fill="#404040"/><path d="M8 1h1v8h-1zM1 8h8v1h-8z" fill="#9a9a9a"/></svg>
<svg style="left:44px;top:341px" width="16" height="14"><rect x="9" y="0" width="1" height="1" fill="#8e98c8"/><rect x="11" y="0" width="1" height="1" fill="#8e98c8"/><rect x="9" y="1" width="1" height="1" fill="#8e98c8"/><rect x="11" y="1" width="1" height="1" fill="#8e98c8"/><rect x="8" y="2" width="1" height="1" fill="#0e1a5c"/><rect x="9" y="2" width="2" height="1" fill="#48dcff"/><rect x="11" y="2" width="1" height="1" fill="#2a6ae6"/><rect x="12" y="2" width="1" height="1" fill="#0e1a5c"/><rect x="8" y="3" width="5" height="1" fill="#0e1a5c"/><rect x="9" y="4" width="2" height="1" fill="#c2c8e8"/><rect x="11" y="4" width="1" height="1" fill="#0e1a5c"/><rect x="8" y="5" width="3" height="1" fill="#c2c8e8"/><rect x="11" y="5" width="1" height="1" fill="#0e1a5c"/><rect x="12" y="5" width="1" height="1" fill="#c2c8e8"/><rect x="0" y="6" width="4" height="1" fill="#c2c8e8"/><rect x="7" y="6" width="3" height="1" fill="#c2c8e8"/><rect x="10" y="6" width="1" height="1" fill="#0e1a5c"/><rect x="12" y="6" width="1" height="1" fill="#0e1a5c"/><rect x="13" y="6" width="3" height="1" fill="#c2c8e8"/><rect x="0" y="7" width="4" height="1" fill="#8e98c8"/><rect x="4" y="7" width="1" height="1" fill="#c2c8e8"/><rect x="6" y="7" width="3" height="1" fill="#c2c8e8"/><rect x="9" y="7" width="1" height="1" fill="#0e1a5c"/><rect x="13" y="7" width="1" height="1" fill="#0e1a5c"/><rect x="14" y="7" width="2" height="1" fill="#8e98c8"/><rect x="0" y="8" width="4" height="1" fill="#0e1a5c"/><rect x="4" y="8" width="4" height="1" fill="#c2c8e8"/><rect x="8" y="8" width="1" height="1" fill="#0e1a5c"/><rect x="13" y="8" width="3" height="1" fill="#0e1a5c"/><rect x="4" y="9" width="3" height="1" fill="#c2c8e8"/><rect x="7" y="9" width="2" height="1" fill="#0e1a5c"/><rect x="4" y="10" width="1" height="1" fill="#0e1a5c"/><rect x="5" y="10" width="2" height="1" fill="#c2c8e8"/><rect x="7" y="10" width="1" height="1" fill="#0e1a5c"/><rect x="4" y="11" width="4" height="1" fill="#0e1a5c"/><rect x="3" y="12" width="1" height="1" fill="#0e1a5c"/><rect x="4" y="12" width="2" height="1" fill="#48dcff"/><rect x="6" y="12" width="1" height="1" fill="#2a6ae6"/><rect x="7" y="12" width="2" height="1" fill="#0e1a5c"/><rect x="3" y="13" width="2" height="1" fill="#0e1a5c"/><rect x="7" y="13" width="2" height="1" fill="#0e1a5c"/></svg>
<div class="t" style="left:64px;top:342px;">NetWare Systems</div>
<div class="a" style="left:23px;top:364px;width:6px;height:1px;background:repeating-linear-gradient(90deg,#848284 0 1px,transparent 1px 2px)"></div>
<div class="a" style="left:13px;top:360px;width:9px;height:9px;border:1px solid #848284;background:#fff"></div>
<div class="a" style="left:15px;top:364px;width:5px;height:1px;background:#000"></div>
<div class="a" style="left:17px;top:362px;width:1px;height:5px;background:#000"></div>
<svg style="left:31px;top:359px" width="10" height="10"><rect width="10" height="10" fill="#c8c8c8"/><path d="M1 1h8v8h-8z" fill="#d6d6d6"/><path d="M2 2h6v1h-6zM2 2h1v6h-1z" fill="#808080"/><rect x="3" y="3" width="4" height="4" fill="#fff"/><path d="M9 0h1v10h-1zM0 9h10v1h-10z" fill="#404040"/><path d="M8 1h1v8h-1zM1 8h8v1h-8z" fill="#9a9a9a"/></svg>
<svg style="left:44px;top:357px" width="16" height="14"><rect x="9" y="0" width="1" height="1" fill="#8e98c8"/><rect x="11" y="0" width="1" height="1" fill="#8e98c8"/><rect x="9" y="1" width="1" height="1" fill="#8e98c8"/><rect x="11" y="1" width="1" height="1" fill="#8e98c8"/><rect x="8" y="2" width="1" height="1" fill="#0e1a5c"/><rect x="9" y="2" width="2" height="1" fill="#48dcff"/><rect x="11" y="2" width="1" height="1" fill="#2a6ae6"/><rect x="12" y="2" width="1" height="1" fill="#0e1a5c"/><rect x="8" y="3" width="5" height="1" fill="#0e1a5c"/><rect x="9" y="4" width="2" height="1" fill="#c2c8e8"/><rect x="11" y="4" width="1" height="1" fill="#0e1a5c"/><rect x="8" y="5" width="3" height="1" fill="#c2c8e8"/><rect x="11" y="5" width="1" height="1" fill="#0e1a5c"/><rect x="12" y="5" width="1" height="1" fill="#c2c8e8"/><rect x="0" y="6" width="4" height="1" fill="#c2c8e8"/><rect x="7" y="6" width="3" height="1" fill="#c2c8e8"/><rect x="10" y="6" width="1" height="1" fill="#0e1a5c"/><rect x="12" y="6" width="1" height="1" fill="#0e1a5c"/><rect x="13" y="6" width="3" height="1" fill="#c2c8e8"/><rect x="0" y="7" width="4" height="1" fill="#8e98c8"/><rect x="4" y="7" width="1" height="1" fill="#c2c8e8"/><rect x="6" y="7" width="3" height="1" fill="#c2c8e8"/><rect x="9" y="7" width="1" height="1" fill="#0e1a5c"/><rect x="13" y="7" width="1" height="1" fill="#0e1a5c"/><rect x="14" y="7" width="2" height="1" fill="#8e98c8"/><rect x="0" y="8" width="4" height="1" fill="#0e1a5c"/><rect x="4" y="8" width="4" height="1" fill="#c2c8e8"/><rect x="8" y="8" width="1" height="1" fill="#0e1a5c"/><rect x="13" y="8" width="3" height="1" fill="#0e1a5c"/><rect x="4" y="9" width="3" height="1" fill="#c2c8e8"/><rect x="7" y="9" width="2" height="1" fill="#0e1a5c"/><rect x="4" y="10" width="1" height="1" fill="#0e1a5c"/><rect x="5" y="10" width="2" height="1" fill="#c2c8e8"/><rect x="7" y="10" width="1" height="1" fill="#0e1a5c"/><rect x="4" y="11" width="4" height="1" fill="#0e1a5c"/><rect x="3" y="12" width="1" height="1" fill="#0e1a5c"/><rect x="4" y="12" width="2" height="1" fill="#48dcff"/><rect x="6" y="12" width="1" height="1" fill="#2a6ae6"/><rect x="7" y="12" width="2" height="1" fill="#0e1a5c"/><rect x="3" y="13" width="2" height="1" fill="#0e1a5c"/><rect x="7" y="13" width="2" height="1" fill="#0e1a5c"/></svg>
<div class="t" style="left:64px;top:358px;">UNIX/Linux Systems</div>
<div class="a" style="left:23px;top:380px;width:6px;height:1px;background:repeating-linear-gradient(90deg,#848284 0 1px,transparent 1px 2px)"></div>
<div class="a" style="left:13px;top:376px;width:9px;height:9px;border:1px solid #848284;background:#fff"></div>
<div class="a" style="left:15px;top:380px;width:5px;height:1px;background:#000"></div>
<div class="a" style="left:17px;top:378px;width:1px;height:5px;background:#000"></div>
<svg style="left:31px;top:375px" width="10" height="10"><rect width="10" height="10" fill="#c8c8c8"/><path d="M1 1h8v8h-8z" fill="#d6d6d6"/><path d="M2 2h6v1h-6zM2 2h1v6h-1z" fill="#808080"/><rect x="3" y="3" width="4" height="4" fill="#fff"/><path d="M9 0h1v10h-1zM0 9h10v1h-10z" fill="#404040"/><path d="M8 1h1v8h-1zM1 8h8v1h-8z" fill="#9a9a9a"/></svg>
<svg style="left:44px;top:373px" width="16" height="14"><rect x="9" y="0" width="1" height="1" fill="#8e98c8"/><rect x="11" y="0" width="1" height="1" fill="#8e98c8"/><rect x="9" y="1" width="1" height="1" fill="#8e98c8"/><rect x="11" y="1" width="1" height="1" fill="#8e98c8"/><rect x="8" y="2" width="1" height="1" fill="#0e1a5c"/><rect x="9" y="2" width="2" height="1" fill="#48dcff"/><rect x="11" y="2" width="1" height="1" fill="#2a6ae6"/><rect x="12" y="2" width="1" height="1" fill="#0e1a5c"/><rect x="8" y="3" width="5" height="1" fill="#0e1a5c"/><rect x="9" y="4" width="2" height="1" fill="#c2c8e8"/><rect x="11" y="4" width="1" height="1" fill="#0e1a5c"/><rect x="8" y="5" width="3" height="1" fill="#c2c8e8"/><rect x="11" y="5" width="1" height="1" fill="#0e1a5c"/><rect x="12" y="5" width="1" height="1" fill="#c2c8e8"/><rect x="0" y="6" width="4" height="1" fill="#c2c8e8"/><rect x="7" y="6" width="3" height="1" fill="#c2c8e8"/><rect x="10" y="6" width="1" height="1" fill="#0e1a5c"/><rect x="12" y="6" width="1" height="1" fill="#0e1a5c"/><rect x="13" y="6" width="3" height="1" fill="#c2c8e8"/><rect x="0" y="7" width="4" height="1" fill="#8e98c8"/><rect x="4" y="7" width="1" height="1" fill="#c2c8e8"/><rect x="6" y="7" width="3" height="1" fill="#c2c8e8"/><rect x="9" y="7" width="1" height="1" fill="#0e1a5c"/><rect x="13" y="7" width="1" height="1" fill="#0e1a5c"/><rect x="14" y="7" width="2" height="1" fill="#8e98c8"/><rect x="0" y="8" width="4" height="1" fill="#0e1a5c"/><rect x="4" y="8" width="4" height="1" fill="#c2c8e8"/><rect x="8" y="8" width="1" height="1" fill="#0e1a5c"/><rect x="13" y="8" width="3" height="1" fill="#0e1a5c"/><rect x="4" y="9" width="3" height="1" fill="#c2c8e8"/><rect x="7" y="9" width="2" height="1" fill="#0e1a5c"/><rect x="4" y="10" width="1" height="1" fill="#0e1a5c"/><rect x="5" y="10" width="2" height="1" fill="#c2c8e8"/><rect x="7" y="10" width="1" height="1" fill="#0e1a5c"/><rect x="4" y="11" width="4" height="1" fill="#0e1a5c"/><rect x="3" y="12" width="1" height="1" fill="#0e1a5c"/><rect x="4" y="12" width="2" height="1" fill="#48dcff"/><rect x="6" y="12" width="1" height="1" fill="#2a6ae6"/><rect x="7" y="12" width="2" height="1" fill="#0e1a5c"/><rect x="3" y="13" width="2" height="1" fill="#0e1a5c"/><rect x="7" y="13" width="2" height="1" fill="#0e1a5c"/></svg>
<div class="t" style="left:64px;top:374px;">Mac OS X Systems</div>
<div class="a" style="left:23px;top:396px;width:6px;height:1px;background:repeating-linear-gradient(90deg,#848284 0 1px,transparent 1px 2px)"></div>
<div class="a" style="left:13px;top:392px;width:9px;height:9px;border:1px solid #848284;background:#fff"></div>
<div class="a" style="left:15px;top:396px;width:5px;height:1px;background:#000"></div>
<div class="a" style="left:17px;top:394px;width:1px;height:5px;background:#000"></div>
<svg style="left:31px;top:391px" width="10" height="10"><rect width="10" height="10" fill="#c8c8c8"/><path d="M1 1h8v8h-8z" fill="#d6d6d6"/><path d="M2 2h6v1h-6zM2 2h1v6h-1z" fill="#808080"/><rect x="3" y="3" width="4" height="4" fill="#fff"/><path d="M9 0h1v10h-1zM0 9h10v1h-10z" fill="#404040"/><path d="M8 1h1v8h-1zM1 8h8v1h-8z" fill="#9a9a9a"/></svg>
<svg style="left:44px;top:389px" width="16" height="14"><rect x="9" y="0" width="1" height="1" fill="#8e98c8"/><rect x="11" y="0" width="1" height="1" fill="#8e98c8"/><rect x="9" y="1" width="1" height="1" fill="#8e98c8"/><rect x="11" y="1" width="1" height="1" fill="#8e98c8"/><rect x="8" y="2" width="1" height="1" fill="#0e1a5c"/><rect x="9" y="2" width="2" height="1" fill="#48dcff"/><rect x="11" y="2" width="1" height="1" fill="#2a6ae6"/><rect x="12" y="2" width="1" height="1" fill="#0e1a5c"/><rect x="8" y="3" width="5" height="1" fill="#0e1a5c"/><rect x="9" y="4" width="2" height="1" fill="#c2c8e8"/><rect x="11" y="4" width="1" height="1" fill="#0e1a5c"/><rect x="8" y="5" width="3" height="1" fill="#c2c8e8"/><rect x="11" y="5" width="1" height="1" fill="#0e1a5c"/><rect x="12" y="5" width="1" height="1" fill="#c2c8e8"/><rect x="0" y="6" width="4" height="1" fill="#c2c8e8"/><rect x="7" y="6" width="3" height="1" fill="#c2c8e8"/><rect x="10" y="6" width="1" height="1" fill="#0e1a5c"/><rect x="12" y="6" width="1" height="1" fill="#0e1a5c"/><rect x="13" y="6" width="3" height="1" fill="#c2c8e8"/><rect x="0" y="7" width="4" height="1" fill="#8e98c8"/><rect x="4" y="7" width="1" height="1" fill="#c2c8e8"/><rect x="6" y="7" width="3" height="1" fill="#c2c8e8"/><rect x="9" y="7" width="1" height="1" fill="#0e1a5c"/><rect x="13" y="7" width="1" height="1" fill="#0e1a5c"/><rect x="14" y="7" width="2" height="1" fill="#8e98c8"/><rect x="0" y="8" width="4" height="1" fill="#0e1a5c"/><rect x="4" y="8" width="4" height="1" fill="#c2c8e8"/><rect x="8" y="8" width="1" height="1" fill="#0e1a5c"/><rect x="13" y="8" width="3" height="1" fill="#0e1a5c"/><rect x="4" y="9" width="3" height="1" fill="#c2c8e8"/><rect x="7" y="9" width="2" height="1" fill="#0e1a5c"/><rect x="4" y="10" width="1" height="1" fill="#0e1a5c"/><rect x="5" y="10" width="2" height="1" fill="#c2c8e8"/><rect x="7" y="10" width="1" height="1" fill="#0e1a5c"/><rect x="4" y="11" width="4" height="1" fill="#0e1a5c"/><rect x="3" y="12" width="1" height="1" fill="#0e1a5c"/><rect x="4" y="12" width="2" height="1" fill="#48dcff"/><rect x="6" y="12" width="1" height="1" fill="#2a6ae6"/><rect x="7" y="12" width="2" height="1" fill="#0e1a5c"/><rect x="3" y="13" width="2" height="1" fill="#0e1a5c"/><rect x="7" y="13" width="2" height="1" fill="#0e1a5c"/></svg>
<div class="t" style="left:64px;top:390px;">NAS Servers</div>
<div class="a" style="left:23px;top:412px;width:6px;height:1px;background:repeating-linear-gradient(90deg,#848284 0 1px,transparent 1px 2px)"></div>
<div class="a" style="left:13px;top:408px;width:9px;height:9px;border:1px solid #848284;background:#fff"></div>
<div class="a" style="left:15px;top:412px;width:5px;height:1px;background:#000"></div>
<div class="a" style="left:17px;top:410px;width:1px;height:5px;background:#000"></div>
<svg style="left:31px;top:407px" width="10" height="10"><rect width="10" height="10" fill="#c8c8c8"/><path d="M1 1h8v8h-8z" fill="#d6d6d6"/><path d="M2 2h6v1h-6zM2 2h1v6h-1z" fill="#808080"/><rect x="3" y="3" width="4" height="4" fill="#fff"/><path d="M9 0h1v10h-1zM0 9h10v1h-10z" fill="#404040"/><path d="M8 1h1v8h-1zM1 8h8v1h-8z" fill="#9a9a9a"/></svg>
<svg style="left:44px;top:405px" width="16" height="14"><rect x="9" y="0" width="1" height="1" fill="#8e98c8"/><rect x="11" y="0" width="1" height="1" fill="#8e98c8"/><rect x="9" y="1" width="1" height="1" fill="#8e98c8"/><rect x="11" y="1" width="1" height="1" fill="#8e98c8"/><rect x="8" y="2" width="1" height="1" fill="#0e1a5c"/><rect x="9" y="2" width="2" height="1" fill="#48dcff"/><rect x="11" y="2" width="1" height="1" fill="#2a6ae6"/><rect x="12" y="2" width="1" height="1" fill="#0e1a5c"/><rect x="8" y="3" width="5" height="1" fill="#0e1a5c"/><rect x="9" y="4" width="2" height="1" fill="#c2c8e8"/><rect x="11" y="4" width="1" height="1" fill="#0e1a5c"/><rect x="8" y="5" width="3" height="1" fill="#c2c8e8"/><rect x="11" y="5" width="1" height="1" fill="#0e1a5c"/><rect x="12" y="5" width="1" height="1" fill="#c2c8e8"/><rect x="0" y="6" width="4" height="1" fill="#c2c8e8"/><rect x="7" y="6" width="3" height="1" fill="#c2c8e8"/><rect x="10" y="6" width="1" height="1" fill="#0e1a5c"/><rect x="12" y="6" width="1" height="1" fill="#0e1a5c"/><rect x="13" y="6" width="3" height="1" fill="#c2c8e8"/><rect x="0" y="7" width="4" height="1" fill="#8e98c8"/><rect x="4" y="7" width="1" height="1" fill="#c2c8e8"/><rect x="6" y="7" width="3" height="1" fill="#c2c8e8"/><rect x="9" y="7" width="1" height="1" fill="#0e1a5c"/><rect x="13" y="7" width="1" height="1" fill="#0e1a5c"/><rect x="14" y="7" width="2" height="1" fill="#8e98c8"/><rect x="0" y="8" width="4" height="1" fill="#0e1a5c"/><rect x="4" y="8" width="4" height="1" fill="#c2c8e8"/><rect x="8" y="8" width="1" height="1" fill="#0e1a5c"/><rect x="13" y="8" width="3" height="1" fill="#0e1a5c"/><rect x="4" y="9" width="3" height="1" fill="#c2c8e8"/><rect x="7" y="9" width="2" height="1" fill="#0e1a5c"/><rect x="4" y="10" width="1" height="1" fill="#0e1a5c"/><rect x="5" y="10" width="2" height="1" fill="#c2c8e8"/><rect x="7" y="10" width="1" height="1" fill="#0e1a5c"/><rect x="4" y="11" width="4" height="1" fill="#0e1a5c"/><rect x="3" y="12" width="1" height="1" fill="#0e1a5c"/><rect x="4" y="12" width="2" height="1" fill="#48dcff"/><rect x="6" y="12" width="1" height="1" fill="#2a6ae6"/><rect x="7" y="12" width="2" height="1" fill="#0e1a5c"/><rect x="3" y="13" width="2" height="1" fill="#0e1a5c"/><rect x="7" y="13" width="2" height="1" fill="#0e1a5c"/></svg>
<div class="t" style="left:64px;top:406px;">AS400 Systems</div>
<div class="a" style="left:23px;top:428px;width:6px;height:1px;background:repeating-linear-gradient(90deg,#848284 0 1px,transparent 1px 2px)"></div>
<div class="a" style="left:13px;top:424px;width:9px;height:9px;border:1px solid #848284;background:#fff"></div>
<div class="a" style="left:15px;top:428px;width:5px;height:1px;background:#000"></div>
<div class="a" style="left:17px;top:426px;width:1px;height:5px;background:#000"></div>
<svg style="left:31px;top:423px" width="10" height="10"><rect width="10" height="10" fill="#c8c8c8"/><path d="M1 1h8v8h-8z" fill="#d6d6d6"/><path d="M2 2h6v1h-6zM2 2h1v6h-1z" fill="#808080"/><rect x="3" y="3" width="4" height="4" fill="#fff"/><path d="M9 0h1v10h-1zM0 9h10v1h-10z" fill="#404040"/><path d="M8 1h1v8h-1zM1 8h8v1h-8z" fill="#9a9a9a"/></svg>
<svg style="left:44px;top:421px" width="16" height="14"><rect x="9" y="0" width="1" height="1" fill="#8e98c8"/><rect x="11" y="0" width="1" height="1" fill="#8e98c8"/><rect x="9" y="1" width="1" height="1" fill="#8e98c8"/><rect x="11" y="1" width="1" height="1" fill="#8e98c8"/><rect x="8" y="2" width="1" height="1" fill="#0e1a5c"/><rect x="9" y="2" width="2" height="1" fill="#48dcff"/><rect x="11" y="2" width="1" height="1" fill="#2a6ae6"/><rect x="12" y="2" width="1" height="1" fill="#0e1a5c"/><rect x="8" y="3" width="5" height="1" fill="#0e1a5c"/><rect x="9" y="4" width="2" height="1" fill="#c2c8e8"/><rect x="11" y="4" width="1" height="1" fill="#0e1a5c"/><rect x="8" y="5" width="3" height="1" fill="#c2c8e8"/><rect x="11" y="5" width="1" height="1" fill="#0e1a5c"/><rect x="12" y="5" width="1" height="1" fill="#c2c8e8"/><rect x="0" y="6" width="4" height="1" fill="#c2c8e8"/><rect x="7" y="6" width="3" height="1" fill="#c2c8e8"/><rect x="10" y="6" width="1" height="1" fill="#0e1a5c"/><rect x="12" y="6" width="1" height="1" fill="#0e1a5c"/><rect x="13" y="6" width="3" height="1" fill="#c2c8e8"/><rect x="0" y="7" width="4" height="1" fill="#8e98c8"/><rect x="4" y="7" width="1" height="1" fill="#c2c8e8"/><rect x="6" y="7" width="3" height="1" fill="#c2c8e8"/><rect x="9" y="7" width="1" height="1" fill="#0e1a5c"/><rect x="13" y="7" width="1" height="1" fill="#0e1a5c"/><rect x="14" y="7" width="2" height="1" fill="#8e98c8"/><rect x="0" y="8" width="4" height="1" fill="#0e1a5c"/><rect x="4" y="8" width="4" height="1" fill="#c2c8e8"/><rect x="8" y="8" width="1" height="1" fill="#0e1a5c"/><rect x="13" y="8" width="3" height="1" fill="#0e1a5c"/><rect x="4" y="9" width="3" height="1" fill="#c2c8e8"/><rect x="7" y="9" width="2" height="1" fill="#0e1a5c"/><rect x="4" y="10" width="1" height="1" fill="#0e1a5c"/><rect x="5" y="10" width="2" height="1" fill="#c2c8e8"/><rect x="7" y="10" width="1" height="1" fill="#0e1a5c"/><rect x="4" y="11" width="4" height="1" fill="#0e1a5c"/><rect x="3" y="12" width="1" height="1" fill="#0e1a5c"/><rect x="4" y="12" width="2" height="1" fill="#48dcff"/><rect x="6" y="12" width="1" height="1" fill="#2a6ae6"/><rect x="7" y="12" width="2" height="1" fill="#0e1a5c"/><rect x="3" y="13" width="2" height="1" fill="#0e1a5c"/><rect x="7" y="13" width="2" height="1" fill="#0e1a5c"/></svg>
<div class="t" style="left:64px;top:422px;">VMS Systems</div>
<div class="a" style="left:23px;top:444px;width:6px;height:1px;background:repeating-linear-gradient(90deg,#848284 0 1px,transparent 1px 2px)"></div>
<div class="a" style="left:13px;top:440px;width:9px;height:9px;border:1px solid #848284;background:#fff"></div>
<div class="a" style="left:15px;top:444px;width:5px;height:1px;background:#000"></div>
<div class="a" style="left:17px;top:442px;width:1px;height:5px;background:#000"></div>
<svg style="left:31px;top:439px" width="10" height="10"><rect width="10" height="10" fill="#c8c8c8"/><path d="M1 1h8v8h-8z" fill="#d6d6d6"/><path d="M2 2h6v1h-6zM2 2h1v6h-1z" fill="#808080"/><rect x="3" y="3" width="4" height="4" fill="#fff"/><path d="M9 0h1v10h-1zM0 9h10v1h-10z" fill="#404040"/><path d="M8 1h1v8h-1zM1 8h8v1h-8z" fill="#9a9a9a"/></svg>
<svg style="left:43px;top:436px" width="17" height="17"><defs><linearGradient id="ex" x1="0" y1="0" x2="1" y2="1"><stop offset="0" stop-color="#f8e070"/><stop offset="0.6" stop-color="#e8b838"/><stop offset="1" stop-color="#b88418"/></linearGradient></defs><path d="M8 0.5L13.5 6L9.5 14.5L0.5 10.5Z" fill="url(#ex)" stroke="#7a5408" stroke-width="0.9" stroke-linejoin="round"/><path d="M3 9.5h1.2v1h-1.2zM5 8h1.2v1h-1.2zM6 10.5h1.2v1h-1.2zM7 6h1.2v1h-1.2zM4.5 11.8h1.2v1h-1.2zM8 12.5h1.2v1h-1.2zM6.5 4h1.2v1h-1.2z" fill="#fff4b0"/><rect x="9.5" y="5.5" width="6.5" height="11" rx="2" fill="#129aa8" stroke="#0a5e6c"/><path d="M11 8C12 7 14.5 7 14.5 8.5M12.8 9V15M11.5 12H13" stroke="#9aeaff" stroke-width="1.3" fill="none"/></svg>
<div class="t" style="left:64px;top:438px;">Exchange Organization</div>
<svg style="left:38px;top:144px" width="109" height="23"><path d="M7.5 1.5H100.5A6 6 0 0 1 106.5 7.5V15.5A6 6 0 0 1 100.5 21.5H7.5A6 6 0 0 1 1.5 15.5V7.5A6 6 0 0 1 7.5 1.5Z" fill="none" stroke="#ff0000" stroke-width="1" stroke-linejoin="round"/></svg>
<div class="a" style="left:417px;top:116px;width:710px;height:330px;overflow:hidden">
<svg style="left:7px;top:3px" width="10" height="10"><rect width="10" height="10" fill="#48b53a"/><path d="M0 0h10v1h-10zM0 0h1v10h-1z" fill="#7edc6c"/><path d="M1 1h8v1h-8zM1 1h1v8h-1z" fill="#9be88a"/><path d="M2 2h6v6h-6z" fill="#52bf42"/><path d="M9 0h1v10h-1zM0 9h10v1h-10z" fill="#0a5a10"/><path d="M8 1h1v8h-1zM1 8h8v1h-8z" fill="#1d7a1e"/></svg>
<svg style="left:24px;top:1px" width="15" height="13"><defs><linearGradient id="fg" x1="0" y1="0" x2="1" y2="1"><stop offset="0" stop-color="#fffbe0"/><stop offset="0.45" stop-color="#fbe88c"/><stop offset="1" stop-color="#eec23c"/></linearGradient></defs><path d="M1 12.5L14.5 12.5L14.5 13" stroke="#d8d8d8" fill="none"/><path d="M0.5 2.5L1.5 0.5H6.5L7.5 2.5H13.5V11.5H0.5Z" fill="url(#fg)" stroke="#c99a2e"/><path d="M1 2.5H7" stroke="#f6dc80"/></svg>
<div class="t" style="left:40px;top:3px;">dataset</div>
<div class="t" style="left:266px;top:3px;">File Folder</div>
<div class="t" style="left:468.5px;top:3px;">9/11/09</div>
<div class="t" style="left:513.5px;top:3px;">11:52 PM</div>
<svg style="left:7px;top:20px" width="10" height="10"><rect width="10" height="10" fill="#48b53a"/><path d="M0 0h10v1h-10zM0 0h1v10h-1z" fill="#7edc6c"/><path d="M1 1h8v1h-8zM1 1h1v8h-1z" fill="#9be88a"/><path d="M2 2h6v6h-6z" fill="#52bf42"/><path d="M9 0h1v10h-1zM0 9h10v1h-10z" fill="#0a5a10"/><path d="M8 1h1v8h-1zM1 8h8v1h-8z" fill="#1d7a1e"/></svg>
<svg style="left:24px;top:18px" width="15" height="13"><defs><linearGradient id="fg" x1="0" y1="0" x2="1" y2="1"><stop offset="0" stop-color="#fffbe0"/><stop offset="0.45" stop-color="#fbe88c"/><stop offset="1" stop-color="#eec23c"/></linearGradient></defs><path d="M1 12.5L14.5 12.5L14.5 13" stroke="#d8d8d8" fill="none"/><path d="M0.5 2.5L1.5 0.5H6.5L7.5 2.5H13.5V11.5H0.5Z" fill="url(#fg)" stroke="#c99a2e"/><path d="M1 2.5H7" stroke="#f6dc80"/></svg>
<div class="t" style="left:40px;top:20px;">Documents and Settings</div>
<div class="t" style="left:266px;top:20px;">File Folder</div>
<div class="t" style="left:466px;top:20px;">11/03/06</div>
<div class="t" style="left:518.5px;top:20px;">2:00 AM</div>
<svg style="left:7px;top:37px" width="10" height="10"><rect width="10" height="10" fill="#48b53a"/><path d="M0 0h10v1h-10zM0 0h1v10h-1z" fill="#7edc6c"/><path d="M1 1h8v1h-8zM1 1h1v8h-1z" fill="#9be88a"/><path d="M2 2h6v6h-6z" fill="#52bf42"/><path d="M9 0h1v10h-1zM0 9h10v1h-10z" fill="#0a5a10"/><path d="M8 1h1v8h-1zM1 8h8v1h-8z" fill="#1d7a1e"/></svg>
<svg style="left:24px;top:35px" width="15" height="13"><defs><linearGradient id="fg" x1="0" y1="0" x2="1" y2="1"><stop offset="0" stop-color="#fffbe0"/><stop offset="0.45" stop-color="#fbe88c"/><stop offset="1" stop-color="#eec23c"/></linearGradient></defs><path d="M1 12.5L14.5 12.5L14.5 13" stroke="#d8d8d8" fill="none"/><path d="M0.5 2.5L1.5 0.5H6.5L7.5 2.5H13.5V11.5H0.5Z" fill="url(#fg)" stroke="#c99a2e"/><path d="M1 2.5H7" stroke="#f6dc80"/></svg>
<div class="t" style="left:40px;top:37px;">Program Files</div>
<div class="t" style="left:266px;top:37px;">File Folder</div>
<div class="t" style="left:468.5px;top:37px;">1/17/10</div>
<div class="t" style="left:513.5px;top:37px;">10:22 PM</div>
<svg style="left:7px;top:54px" width="10" height="10"><rect width="10" height="10" fill="#48b53a"/><path d="M0 0h10v1h-10zM0 0h1v10h-1z" fill="#7edc6c"/><path d="M1 1h8v1h-8zM1 1h1v8h-1z" fill="#9be88a"/><path d="M2 2h6v6h-6z" fill="#52bf42"/><path d="M9 0h1v10h-1zM0 9h10v1h-10z" fill="#0a5a10"/><path d="M8 1h1v8h-1zM1 8h8v1h-8z" fill="#1d7a1e"/></svg>
<svg style="left:24px;top:52px" width="15" height="13"><defs><linearGradient id="fg" x1="0" y1="0" x2="1" y2="1"><stop offset="0" stop-color="#fffbe0"/><stop offset="0.45" stop-color="#fbe88c"/><stop offset="1" stop-color="#eec23c"/></linearGradient></defs><path d="M1 12.5L14.5 12.5L14.5 13" stroke="#d8d8d8" fill="none"/><path d="M0.5 2.5L1.5 0.5H6.5L7.5 2.5H13.5V11.5H0.5Z" fill="url(#fg)" stroke="#c99a2e"/><path d="M1 2.5H7" stroke="#f6dc80"/></svg>
<div class="t" style="left:40px;top:54px;">RECYCLER</div>
<div class="t" style="left:266px;top:54px;">File Folder</div>
<div class="t" style="left:466px;top:54px;">12/18/08</div>
<div class="t" style="left:518.5px;top:54px;">7:51 PM</div>
<svg style="left:7px;top:71px" width="10" height="10"><rect width="10" height="10" fill="#48b53a"/><path d="M0 0h10v1h-10zM0 0h1v10h-1z" fill="#7edc6c"/><path d="M1 1h8v1h-8zM1 1h1v8h-1z" fill="#9be88a"/><path d="M2 2h6v6h-6z" fill="#52bf42"/><path d="M9 0h1v10h-1zM0 9h10v1h-10z" fill="#0a5a10"/><path d="M8 1h1v8h-1zM1 8h8v1h-8z" fill="#1d7a1e"/></svg>
<svg style="left:24px;top:69px" width="15" height="13"><defs><linearGradient id="fg" x1="0" y1="0" x2="1" y2="1"><stop offset="0" stop-color="#fffbe0"/><stop offset="0.45" stop-color="#fbe88c"/><stop offset="1" stop-color="#eec23c"/></linearGradient></defs><path d="M1 12.5L14.5 12.5L14.5 13" stroke="#d8d8d8" fill="none"/><path d="M0.5 2.5L1.5 0.5H6.5L7.5 2.5H13.5V11.5H0.5Z" fill="url(#fg)" stroke="#c99a2e"/><path d="M1 2.5H7" stroke="#f6dc80"/></svg>
<div class="t" style="left:40px;top:71px;">System Volume Information</div>
<div class="t" style="left:266px;top:71px;">File Folder</div>
<div class="t" style="left:468.5px;top:71px;">9/11/09</div>
<div class="t" style="left:513.5px;top:71px;">11:48 PM</div>
<svg style="left:7px;top:88px" width="10" height="10"><rect width="10" height="10" fill="#48b53a"/><path d="M0 0h10v1h-10zM0 0h1v10h-1z" fill="#7edc6c"/><path d="M1 1h8v1h-8zM1 1h1v8h-1z" fill="#9be88a"/><path d="M2 2h6v6h-6z" fill="#52bf42"/><path d="M9 0h1v10h-1zM0 9h10v1h-10z" fill="#0a5a10"/><path d="M8 1h1v8h-1zM1 8h8v1h-8z" fill="#1d7a1e"/></svg>
<svg style="left:24px;top:86px" width="15" height="13"><defs><linearGradient id="fg" x1="0" y1="0" x2="1" y2="1"><stop offset="0" stop-color="#fffbe0"/><stop offset="0.45" stop-color="#fbe88c"/><stop offset="1" stop-color="#eec23c"/></linearGradient></defs><path d="M1 12.5L14.5 12.5L14.5 13" stroke="#d8d8d8" fill="none"/><path d="M0.5 2.5L1.5 0.5H6.5L7.5 2.5H13.5V11.5H0.5Z" fill="url(#fg)" stroke="#c99a2e"/><path d="M1 2.5H7" stroke="#f6dc80"/></svg>
<div class="t" style="left:40px;top:88px;">test</div>
<div class="t" style="left:266px;top:88px;">File Folder</div>
<div class="t" style="left:466px;top:88px;">12/04/08</div>
<div class="t" style="left:518.5px;top:88px;">5:31 AM</div>
<svg style="left:7px;top:105px" width="10" height="10"><rect width="10" height="10" fill="#48b53a"/><path d="M0 0h10v1h-10zM0 0h1v10h-1z" fill="#7edc6c"/><path d="M1 1h8v1h-8zM1 1h1v8h-1z" fill="#9be88a"/><path d="M2 2h6v6h-6z" fill="#52bf42"/><path d="M9 0h1v10h-1zM0 9h10v1h-10z" fill="#0a5a10"/><path d="M8 1h1v8h-1zM1 8h8v1h-8z" fill="#1d7a1e"/></svg>
<svg style="left:24px;top:103px" width="15" height="13"><defs><linearGradient id="fg" x1="0" y1="0" x2="1" y2="1"><stop offset="0" stop-color="#fffbe0"/><stop offset="0.45" stop-color="#fbe88c"/><stop offset="1" stop-color="#eec23c"/></linearGradient></defs><path d="M1 12.5L14.5 12.5L14.5 13" stroke="#d8d8d8" fill="none"/><path d="M0.5 2.5L1.5 0.5H6.5L7.5 2.5H13.5V11.5H0.5Z" fill="url(#fg)" stroke="#c99a2e"/><path d="M1 2.5H7" stroke="#f6dc80"/></svg>
<div class="t" style="left:40px;top:105px;">WINDOWS</div>
<div class="t" style="left:266px;top:105px;">File Folder</div>
<div class="t" style="left:468.5px;top:105px;">2/01/10</div>
<div class="t" style="left:515.5px;top:105px;">7:16 PM</div>
<svg style="left:7px;top:122px" width="10" height="10"><rect width="10" height="10" fill="#48b53a"/><path d="M0 0h10v1h-10zM0 0h1v10h-1z" fill="#7edc6c"/><path d="M1 1h8v1h-8zM1 1h1v8h-1z" fill="#9be88a"/><path d="M2 2h6v6h-6z" fill="#52bf42"/><path d="M9 0h1v10h-1zM0 9h10v1h-10z" fill="#0a5a10"/><path d="M8 1h1v8h-1zM1 8h8v1h-8z" fill="#1d7a1e"/></svg>
<svg style="left:24px;top:120px" width="15" height="13"><defs><linearGradient id="fg" x1="0" y1="0" x2="1" y2="1"><stop offset="0" stop-color="#fffbe0"/><stop offset="0.45" stop-color="#fbe88c"/><stop offset="1" stop-color="#eec23c"/></linearGradient></defs><path d="M1 12.5L14.5 12.5L14.5 13" stroke="#d8d8d8" fill="none"/><path d="M0.5 2.5L1.5 0.5H6.5L7.5 2.5H13.5V11.5H0.5Z" fill="url(#fg)" stroke="#c99a2e"/><path d="M1 2.5H7" stroke="#f6dc80"/></svg>
<div class="t" style="left:40px;top:122px;">wmpub</div>
<div class="t" style="left:266px;top:122px;">File Folder</div>
<div class="t" style="left:466px;top:122px;">11/03/06</div>
<div class="t" style="left:518.5px;top:122px;">1:22 AM</div>
<svg style="left:7px;top:139px" width="10" height="10"><rect width="10" height="10" fill="#48b53a"/><path d="M0 0h10v1h-10zM0 0h1v10h-1z" fill="#7edc6c"/><path d="M1 1h8v1h-8zM1 1h1v8h-1z" fill="#9be88a"/><path d="M2 2h6v6h-6z" fill="#52bf42"/><path d="M9 0h1v10h-1zM0 9h10v1h-10z" fill="#0a5a10"/><path d="M8 1h1v8h-1zM1 8h8v1h-8z" fill="#1d7a1e"/></svg>
<svg style="left:24px;top:139px" width="15" height="11"><defs><linearGradient id="fi" x1="0" y1="0" x2="0.4" y2="1"><stop offset="0" stop-color="#b4ccee"/><stop offset="1" stop-color="#e6f0fc"/></linearGradient></defs><path d="M0.5 0.5H10L13.5 4V9.5H0.5Z" fill="url(#fi)" stroke="#6676a0"/><path d="M10 0.5L13.5 4H10Z" fill="#b8cce8"/><path d="M10 1V4.5H13.5" fill="none" stroke="#42527a"/><path d="M1 10.5H14" stroke="#c8ccd4"/></svg>
<div class="t" style="left:40px;top:139px;">AUTOEXEC.BAT</div>
<div class="t" style="left:266px;top:139px;">Windows Batch File</div>
<div class="t" style="left:385px;top:139px;">0 Byte(s)</div>
<div class="t" style="left:466px;top:139px;">11/03/06</div>
<div class="t" style="left:518.5px;top:139px;">1:21 AM</div>
<svg style="left:7px;top:156px" width="10" height="10"><rect width="10" height="10" fill="#48b53a"/><path d="M0 0h10v1h-10zM0 0h1v10h-1z" fill="#7edc6c"/><path d="M1 1h8v1h-8zM1 1h1v8h-1z" fill="#9be88a"/><path d="M2 2h6v6h-6z" fill="#52bf42"/><path d="M9 0h1v10h-1zM0 9h10v1h-10z" fill="#0a5a10"/><path d="M8 1h1v8h-1zM1 8h8v1h-8z" fill="#1d7a1e"/></svg>
<svg style="left:24px;top:156px" width="15" height="11"><defs><linearGradient id="fi" x1="0" y1="0" x2="0.4" y2="1"><stop offset="0" stop-color="#b4ccee"/><stop offset="1" stop-color="#e6f0fc"/></linearGradient></defs><path d="M0.5 0.5H10L13.5 4V9.5H0.5Z" fill="url(#fi)" stroke="#6676a0"/><path d="M10 0.5L13.5 4H10Z" fill="#b8cce8"/><path d="M10 1V4.5H13.5" fill="none" stroke="#42527a"/><path d="M1 10.5H14" stroke="#c8ccd4"/></svg>
<div class="t" style="left:40px;top:156px;">boot.ini</div>
<div class="t" style="left:266px;top:156px;">Configuration settings</div>
<div class="t" style="left:385px;top:156px;">210 Byte(s)</div>
<div class="t" style="left:466px;top:156px;">11/03/06</div>
<div class="t" style="left:515.5px;top:156px;">12:49 AM</div>
<svg style="left:7px;top:173px" width="10" height="10"><rect width="10" height="10" fill="#48b53a"/><path d="M0 0h10v1h-10zM0 0h1v10h-1z" fill="#7edc6c"/><path d="M1 1h8v1h-8zM1 1h1v8h-1z" fill="#9be88a"/><path d="M2 2h6v6h-6z" fill="#52bf42"/><path d="M9 0h1v10h-1zM0 9h10v1h-10z" fill="#0a5a10"/><path d="M8 1h1v8h-1zM1 8h8v1h-8z" fill="#1d7a1e"/></svg>
<svg style="left:24px;top:173px" width="15" height="11"><defs><linearGradient id="fi" x1="0" y1="0" x2="0.4" y2="1"><stop offset="0" stop-color="#b4ccee"/><stop offset="1" stop-color="#e6f0fc"/></linearGradient></defs><path d="M0.5 0.5H10L13.5 4V9.5H0.5Z" fill="url(#fi)" stroke="#6676a0"/><path d="M10 0.5L13.5 4H10Z" fill="#b8cce8"/><path d="M10 1V4.5H13.5" fill="none" stroke="#42527a"/><path d="M1 10.5H14" stroke="#c8ccd4"/></svg>
<div class="t" style="left:40px;top:173px;">cms_am.txt</div>
<div class="t" style="left:266px;top:173px;">Text Document</div>
<div class="t" style="left:385px;top:173px;">1.07 MB</div>
<div class="t" style="left:466px;top:173px;">12/02/08</div>
<div class="t" style="left:518.5px;top:173px;">2:18 AM</div>
<svg style="left:7px;top:190px" width="10" height="10"><rect width="10" height="10" fill="#48b53a"/><path d="M0 0h10v1h-10zM0 0h1v10h-1z" fill="#7edc6c"/><path d="M1 1h8v1h-8zM1 1h1v8h-1z" fill="#9be88a"/><path d="M2 2h6v6h-6z" fill="#52bf42"/><path d="M9 0h1v10h-1zM0 9h10v1h-10z" fill="#0a5a10"/><path d="M8 1h1v8h-1zM1 8h8v1h-8z" fill="#1d7a1e"/></svg>
<svg style="left:24px;top:190px" width="15" height="11"><defs><linearGradient id="fi" x1="0" y1="0" x2="0.4" y2="1"><stop offset="0" stop-color="#b4ccee"/><stop offset="1" stop-color="#e6f0fc"/></linearGradient></defs><path d="M0.5 0.5H10L13.5 4V9.5H0.5Z" fill="url(#fi)" stroke="#6676a0"/><path d="M10 0.5L13.5 4H10Z" fill="#b8cce8"/><path d="M10 1V4.5H13.5" fill="none" stroke="#42527a"/><path d="M1 10.5H14" stroke="#c8ccd4"/></svg>
<div class="t" style="left:40px;top:190px;">cms_bhw.txt</div>
<div class="t" style="left:266px;top:190px;">Text Document</div>
<div class="t" style="left:385px;top:190px;">1.01 MB</div>
<div class="t" style="left:466px;top:190px;">12/02/08</div>
<div class="t" style="left:518.5px;top:190px;">2:17 AM</div>
<svg style="left:7px;top:207px" width="10" height="10"><rect width="10" height="10" fill="#48b53a"/><path d="M0 0h10v1h-10zM0 0h1v10h-1z" fill="#7edc6c"/><path d="M1 1h8v1h-8zM1 1h1v8h-1z" fill="#9be88a"/><path d="M2 2h6v6h-6z" fill="#52bf42"/><path d="M9 0h1v10h-1zM0 9h10v1h-10z" fill="#0a5a10"/><path d="M8 1h1v8h-1zM1 8h8v1h-8z" fill="#1d7a1e"/></svg>
<svg style="left:24px;top:207px" width="15" height="11"><defs><linearGradient id="fi" x1="0" y1="0" x2="0.4" y2="1"><stop offset="0" stop-color="#b4ccee"/><stop offset="1" stop-color="#e6f0fc"/></linearGradient></defs><path d="M0.5 0.5H10L13.5 4V9.5H0.5Z" fill="url(#fi)" stroke="#6676a0"/><path d="M10 0.5L13.5 4H10Z" fill="#b8cce8"/><path d="M10 1V4.5H13.5" fill="none" stroke="#42527a"/><path d="M1 10.5H14" stroke="#c8ccd4"/></svg>
<div class="t" style="left:40px;top:207px;">cms_rc.txt</div>
<div class="t" style="left:266px;top:207px;">Text Document</div>
<div class="t" style="left:385px;top:207px;">1.66 MB</div>
<div class="t" style="left:466px;top:207px;">12/02/08</div>
<div class="t" style="left:518.5px;top:207px;">2:21 AM</div>
<svg style="left:7px;top:224px" width="10" height="10"><rect width="10" height="10" fill="#48b53a"/><path d="M0 0h10v1h-10zM0 0h1v10h-1z" fill="#7edc6c"/><path d="M1 1h8v1h-8zM1 1h1v8h-1z" fill="#9be88a"/><path d="M2 2h6v6h-6z" fill="#52bf42"/><path d="M9 0h1v10h-1zM0 9h10v1h-10z" fill="#0a5a10"/><path d="M8 1h1v8h-1zM1 8h8v1h-8z" fill="#1d7a1e"/></svg>
<svg style="left:24px;top:224px" width="15" height="11"><defs><linearGradient id="fi" x1="0" y1="0" x2="0.4" y2="1"><stop offset="0" stop-color="#b4ccee"/><stop offset="1" stop-color="#e6f0fc"/></linearGradient></defs><path d="M0.5 0.5H10L13.5 4V9.5H0.5Z" fill="url(#fi)" stroke="#6676a0"/><path d="M10 0.5L13.5 4H10Z" fill="#b8cce8"/><path d="M10 1V4.5H13.5" fill="none" stroke="#42527a"/><path d="M1 10.5H14" stroke="#c8ccd4"/></svg>
<div class="t" style="left:40px;top:224px;">cms_sd.txt</div>
<div class="t" style="left:266px;top:224px;">Text Document</div>
<div class="t" style="left:385px;top:224px;">1.64 MB</div>
<div class="t" style="left:466px;top:224px;">12/02/08</div>
<div class="t" style="left:518.5px;top:224px;">2:20 AM</div>
<svg style="left:7px;top:241px" width="10" height="10"><rect width="10" height="10" fill="#48b53a"/><path d="M0 0h10v1h-10zM0 0h1v10h-1z" fill="#7edc6c"/><path d="M1 1h8v1h-8zM1 1h1v8h-1z" fill="#9be88a"/><path d="M2 2h6v6h-6z" fill="#52bf42"/><path d="M9 0h1v10h-1zM0 9h10v1h-10z" fill="#0a5a10"/><path d="M8 1h1v8h-1zM1 8h8v1h-8z" fill="#1d7a1e"/></svg>
<svg style="left:24px;top:241px" width="15" height="11"><defs><linearGradient id="fi" x1="0" y1="0" x2="0.4" y2="1"><stop offset="0" stop-color="#b4ccee"/><stop offset="1" stop-color="#e6f0fc"/></linearGradient></defs><path d="M0.5 0.5H10L13.5 4V9.5H0.5Z" fill="url(#fi)" stroke="#6676a0"/><path d="M10 0.5L13.5 4H10Z" fill="#b8cce8"/><path d="M10 1V4.5H13.5" fill="none" stroke="#42527a"/><path d="M1 10.5H14" stroke="#c8ccd4"/></svg>
<div class="t" style="left:40px;top:241px;">CONFIG.SYS</div>
<div class="t" style="left:266px;top:241px;">System file</div>
<div class="t" style="left:385px;top:241px;">0 Byte(s)</div>
<div class="t" style="left:466px;top:241px;">11/03/06</div>
<div class="t" style="left:518.5px;top:241px;">1:21 AM</div>
<svg style="left:7px;top:258px" width="10" height="10"><rect width="10" height="10" fill="#48b53a"/><path d="M0 0h10v1h-10zM0 0h1v10h-1z" fill="#7edc6c"/><path d="M1 1h8v1h-8zM1 1h1v8h-1z" fill="#9be88a"/><path d="M2 2h6v6h-6z" fill="#52bf42"/><path d="M9 0h1v10h-1zM0 9h10v1h-10z" fill="#0a5a10"/><path d="M8 1h1v8h-1zM1 8h8v1h-8z" fill="#1d7a1e"/></svg>
<svg style="left:24px;top:258px" width="15" height="11"><defs><linearGradient id="fi" x1="0" y1="0" x2="0.4" y2="1"><stop offset="0" stop-color="#b4ccee"/><stop offset="1" stop-color="#e6f0fc"/></linearGradient></defs><path d="M0.5 0.5H10L13.5 4V9.5H0.5Z" fill="url(#fi)" stroke="#6676a0"/><path d="M10 0.5L13.5 4H10Z" fill="#b8cce8"/><path d="M10 1V4.5H13.5" fill="none" stroke="#42527a"/><path d="M1 10.5H14" stroke="#c8ccd4"/></svg>
<div class="t" style="left:40px;top:258px;">IO.SYS</div>
<div class="t" style="left:266px;top:258px;">System file</div>
<div class="t" style="left:385px;top:258px;">0 Byte(s)</div>
<div class="t" style="left:466px;top:258px;">11/03/06</div>
<div class="t" style="left:518.5px;top:258px;">1:21 AM</div>
<svg style="left:7px;top:275px" width="10" height="10"><rect width="10" height="10" fill="#48b53a"/><path d="M0 0h10v1h-10zM0 0h1v10h-1z" fill="#7edc6c"/><path d="M1 1h8v1h-8zM1 1h1v8h-1z" fill="#9be88a"/><path d="M2 2h6v6h-6z" fill="#52bf42"/><path d="M9 0h1v10h-1zM0 9h10v1h-10z" fill="#0a5a10"/><path d="M8 1h1v8h-1zM1 8h8v1h-8z" fill="#1d7a1e"/></svg>
<svg style="left:24px;top:275px" width="15" height="11"><defs><linearGradient id="fi" x1="0" y1="0" x2="0.4" y2="1"><stop offset="0" stop-color="#b4ccee"/><stop offset="1" stop-color="#e6f0fc"/></linearGradient></defs><path d="M0.5 0.5H10L13.5 4V9.5H0.5Z" fill="url(#fi)" stroke="#6676a0"/><path d="M10 0.5L13.5 4H10Z" fill="#b8cce8"/><path d="M10 1V4.5H13.5" fill="none" stroke="#42527a"/><path d="M1 10.5H14" stroke="#c8ccd4"/></svg>
<div class="t" style="left:40px;top:275px;">MSDOS.SYS</div>
<div class="t" style="left:266px;top:275px;">System file</div>
<div class="t" style="left:385px;top:275px;">0 Byte(s)</div>
<div class="t" style="left:466px;top:275px;">11/03/06</div>
<div class="t" style="left:518.5px;top:275px;">1:21 AM</div>
<svg style="left:7px;top:292px" width="10" height="10"><rect width="10" height="10" fill="#48b53a"/><path d="M0 0h10v1h-10zM0 0h1v10h-1z" fill="#7edc6c"/><path d="M1 1h8v1h-8zM1 1h1v8h-1z" fill="#9be88a"/><path d="M2 2h6v6h-6z" fill="#52bf42"/><path d="M9 0h1v10h-1zM0 9h10v1h-10z" fill="#0a5a10"/><path d="M8 1h1v8h-1zM1 8h8v1h-8z" fill="#1d7a1e"/></svg>
<svg style="left:24px;top:292px" width="15" height="11"><defs><linearGradient id="fi" x1="0" y1="0" x2="0.4" y2="1"><stop offset="0" stop-color="#b4ccee"/><stop offset="1" stop-color="#e6f0fc"/></linearGradient></defs><path d="M0.5 0.5H10L13.5 4V9.5H0.5Z" fill="url(#fi)" stroke="#6676a0"/><path d="M10 0.5L13.5 4H10Z" fill="#b8cce8"/><path d="M10 1V4.5H13.5" fill="none" stroke="#42527a"/><path d="M1 10.5H14" stroke="#c8ccd4"/></svg>
<div class="t" style="left:40px;top:292px;">msizap.exe</div>
<div class="t" style="left:266px;top:292px;">Application</div>
<div class="t" style="left:385px;top:292px;">92 KB</div>
<div class="t" style="left:468.5px;top:292px;">2/17/07</div>
<div class="t" style="left:513.5px;top:292px;">11:01 AM</div>
<svg style="left:7px;top:309px" width="10" height="10"><rect width="10" height="10" fill="#48b53a"/><path d="M0 0h10v1h-10zM0 0h1v10h-1z" fill="#7edc6c"/><path d="M1 1h8v1h-8zM1 1h1v8h-1z" fill="#9be88a"/><path d="M2 2h6v6h-6z" fill="#52bf42"/><path d="M9 0h1v10h-1zM0 9h10v1h-10z" fill="#0a5a10"/><path d="M8 1h1v8h-1zM1 8h8v1h-8z" fill="#1d7a1e"/></svg>
<svg style="left:24px;top:309px" width="15" height="11"><defs><linearGradient id="fi" x1="0" y1="0" x2="0.4" y2="1"><stop offset="0" stop-color="#b4ccee"/><stop offset="1" stop-color="#e6f0fc"/></linearGradient></defs><path d="M0.5 0.5H10L13.5 4V9.5H0.5Z" fill="url(#fi)" stroke="#6676a0"/><path d="M10 0.5L13.5 4H10Z" fill="#b8cce8"/><path d="M10 1V4.5H13.5" fill="none" stroke="#42527a"/><path d="M1 10.5H14" stroke="#c8ccd4"/></svg>
<div class="t" style="left:40px;top:309px;">NTDETECT.COM</div>
<div class="t" style="left:266px;top:309px;">MS-DOS Application</div>
<div class="t" style="left:385px;top:309px;">46 KB</div>
<div class="t" style="left:468.5px;top:309px;">3/22/06</div>
<div class="t" style="left:515.5px;top:309px;">5:00 AM</div>
<svg style="left:7px;top:326px" width="10" height="10"><rect width="10" height="10" fill="#48b53a"/><path d="M0 0h10v1h-10zM0 0h1v10h-1z" fill="#7edc6c"/><path d="M1 1h8v1h-8zM1 1h1v8h-1z" fill="#9be88a"/><path d="M2 2h6v6h-6z" fill="#52bf42"/><path d="M9 0h1v10h-1zM0 9h10v1h-10z" fill="#0a5a10"/><path d="M8 1h1v8h-1zM1 8h8v1h-8z" fill="#1d7a1e"/></svg>
<svg style="left:24px;top:326px" width="15" height="11"><defs><linearGradient id="fi" x1="0" y1="0" x2="0.4" y2="1"><stop offset="0" stop-color="#b4ccee"/><stop offset="1" stop-color="#e6f0fc"/></linearGradient></defs><path d="M0.5 0.5H10L13.5 4V9.5H0.5Z" fill="url(#fi)" stroke="#6676a0"/><path d="M10 0.5L13.5 4H10Z" fill="#b8cce8"/><path d="M10 1V4.5H13.5" fill="none" stroke="#42527a"/><path d="M1 10.5H14" stroke="#c8ccd4"/></svg>
<div class="t" style="left:40px;top:326px;">ntldr</div>
<div class="t" style="left:266px;top:326px;">FILE</div>
<div class="t" style="left:385px;top:326px;">250 KB</div>
<div class="t" style="left:466px;top:326px;">11/01/07</div>
<div class="t" style="left:518.5px;top:326px;">3:59 AM</div>
</div>
<div class="a" style="left:417px;top:452px;width:710px;height:200px;overflow:hidden"><div class="a" style="left:-417px;top:-452px;width:1155px;height:656px">
<svg style="left:427px;top:459px" width="62" height="58"><defs>
<radialGradient id="pl" cx="0.42" cy="0.45" r="0.6"><stop offset="0" stop-color="#ffffff"/><stop offset="0.55" stop-color="#f0f0f8"/><stop offset="1" stop-color="#c4c4d4"/></radialGradient>
<linearGradient id="tri" x1="0" y1="0" x2="1" y2="1"><stop offset="0" stop-color="#7ee88a"/><stop offset="0.5" stop-color="#46d058"/><stop offset="1" stop-color="#28b840"/></linearGradient>
</defs>
<path d="M1.5 24L32 2.5L59 13.5L28.5 41Z" fill="#3c3c3c" stroke="#222" stroke-linejoin="round"/>
<path d="M1.5 24L28.5 41L28.5 43L1.5 26Z" fill="#1a1a1a"/>
<path d="M28.5 41L59 13.5L59 15.5L28.5 43Z" fill="#262626"/>
<ellipse cx="26.5" cy="21" rx="19.5" ry="12" transform="rotate(-10 26.5 21)" fill="url(#pl)" stroke="#a8a8b8" stroke-width="0.8"/>
<ellipse cx="26.5" cy="21" rx="5" ry="3.4" transform="rotate(-10 26.5 21)" fill="#ececf4" stroke="#a8a8b8" stroke-width="0.8"/>
<path d="M31 6.5L38 4L41.5 7.5L34.5 10Z" fill="#3c3c3c" stroke="#5ac85a" stroke-width="1.3"/>
<path d="M46 7L56 11.5L55 17L48 21L42 14Z" fill="#d0d0d8" stroke="#808088" stroke-width="0.8"/>
<path d="M24 18L49 12" stroke="#e0e0e8" stroke-width="1.8"/>
<path d="M37 42L57 28.5V55Z" fill="url(#tri)" stroke="#20b838" stroke-width="1.6" stroke-linejoin="round"/>
<path d="M40 41.5L55.5 31" stroke="#d8ffd8" stroke-width="1"/>
</svg>
<div class="t" style="left:492px;top:469px;color:#0e3e7a;font-weight:bold;font-size:13px;letter-spacing:1.4px">VMware</div>
<div class="a" style="left:491px;top:484px;width:631px;height:2px;background:repeating-linear-gradient(90deg,#c4c4c4 0 2px,transparent 2px 4px)"></div>
<div class="a" style="left:587px;top:544px;width:539px;height:112px;background:#eff6fe;border-left:1px solid #a8b8c8;border-top:1px solid #a4a8b4;border-right:1px solid #a8b8c8"></div>
<div class="a" style="left:587px;top:524px;width:100px;height:21px;background:linear-gradient(#cfe0f2,#e8f2fc 60%,#eff6fe);border:1px solid #a4acb8;border-bottom:none;border-radius:3px 3px 0 0"></div>
<div class="t" style="left:603px;top:529px;font-weight:bold;font-size:11px;letter-spacing:1.7px;color:#000">Properties</div>
<div class="a" style="left:598px;top:559px;width:517px;height:24px;background:#6ba6cd"></div>
<div class="t" style="left:603px;top:565px;color:#fff;font-weight:bold;font-size:11px;letter-spacing:1.5px">Additional Information</div>
<div class="a" style="left:598px;top:583px;width:233px;height:18px;background:#f6f2f5;border-left:1px solid #6ba6cd;border-bottom:1px solid #6ba6cd"></div>
<div class="a" style="left:831px;top:583px;width:284px;height:18px;background:#fff;border-left:1px solid #6ba6cd;border-right:1px solid #6ba6cd;border-bottom:1px solid #6ba6cd"></div>
<div class="t" style="left:604px;top:585px;letter-spacing:1.0px">Media Name</div>
<div class="t" style="left:836px;top:585px;letter-spacing:1.2px">2/02/10 10:22 AM[S/N:1100031]</div>
<div class="a" style="left:598px;top:601px;width:233px;height:18px;background:#f6f2f5;border-left:1px solid #6ba6cd;border-bottom:1px solid #6ba6cd"></div>
<div class="a" style="left:831px;top:601px;width:284px;height:18px;background:#fff;border-left:1px solid #6ba6cd;border-right:1px solid #6ba6cd;border-bottom:1px solid #6ba6cd"></div>
<div class="t" style="left:604px;top:603px;letter-spacing:1.0px">ID</div>
<div class="t" style="left:836px;top:603px;letter-spacing:1.2px">73B7</div>
<div class="a" style="left:598px;top:619px;width:233px;height:18px;background:#f6f2f5;border-left:1px solid #6ba6cd;border-bottom:1px solid #6ba6cd"></div>
<div class="a" style="left:831px;top:619px;width:284px;height:18px;background:#fff;border-left:1px solid #6ba6cd;border-right:1px solid #6ba6cd;border-bottom:1px solid #6ba6cd"></div>
<div class="t" style="left:604px;top:621px;letter-spacing:1.0px">Sequence No.</div>
<div class="t" style="left:836px;top:621px;letter-spacing:1.2px">1</div>
<div class="a" style="left:598px;top:637px;width:233px;height:18px;background:#f6f2f5;border-left:1px solid #6ba6cd;border-bottom:1px solid #6ba6cd"></div>
<div class="a" style="left:831px;top:637px;width:284px;height:18px;background:#fff;border-left:1px solid #6ba6cd;border-right:1px solid #6ba6cd;border-bottom:1px solid #6ba6cd"></div>
<div class="t" style="left:604px;top:639px;letter-spacing:1.0px">Session No.</div>
<div class="t" style="left:836px;top:639px;letter-spacing:1.2px">5</div>
</div></div>
</body></html>
